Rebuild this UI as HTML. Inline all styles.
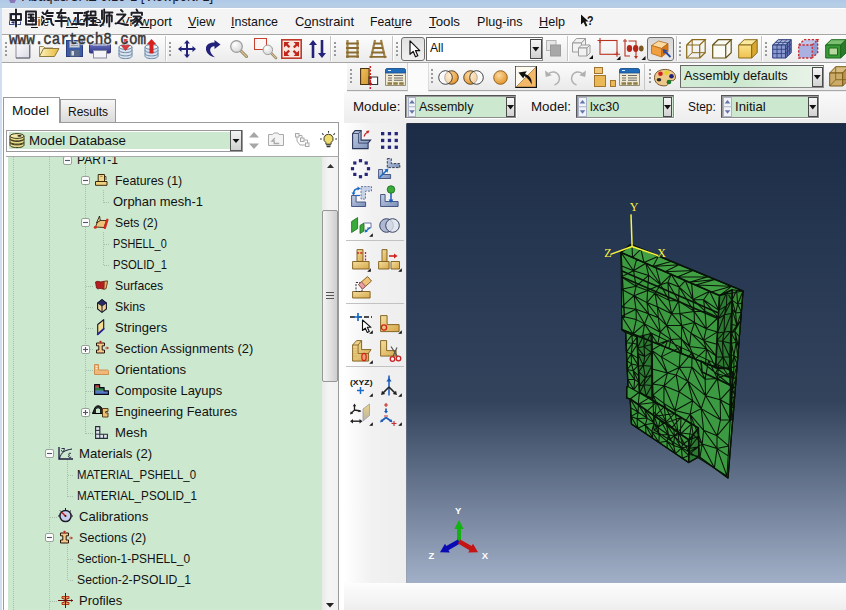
<!DOCTYPE html>
<html><head><meta charset="utf-8">
<style>
*{box-sizing:border-box;margin:0;padding:0}
html,body{width:846px;height:610px;overflow:hidden;background:#fff}
body{font-family:"Liberation Sans",sans-serif;font-size:14px;color:#111;position:relative}
.abs{position:absolute}
.t{position:absolute;white-space:nowrap;transform-origin:0 50%;display:block}
svg{overflow:visible}
</style></head><body>
<div class="abs" style="left:0px;top:0px;width:846px;height:8px;background:linear-gradient(#b0c8e6,#b5cfe8 65%,#bbcbe0);"></div>
<div class="abs" style="left:0px;top:8px;width:2px;height:602px;background:#cfdef0;"></div>
<div class="abs" style="left:2px;top:8px;width:844px;height:27px;background:#f4f4f5;border-top:1px solid #fcfeff;border-bottom:1px solid #a6a6a6"></div>
<div class="abs" style="left:2px;top:35px;width:844px;height:28px;background:linear-gradient(#fdfdfd,#ebebeb);border-bottom:1px solid #a6a6a6"></div>
<div class="abs" style="left:2px;top:63px;width:342px;height:547px;background:#ffffff;"></div>
<div class="abs" style="left:344px;top:63px;width:502px;height:29px;background:linear-gradient(#fcfcfc,#ececec);"></div>
<div class="abs" style="left:344px;top:92px;width:502px;height:31px;background:linear-gradient(#f9f9f9,#ededed);"></div>
<div class="abs" style="left:344px;top:123px;width:62px;height:460px;background:linear-gradient(90deg,#ffffff,#f1f1f1 45%,#eeeeee);"></div>
<div class="abs" style="left:406px;top:123px;width:440px;height:461px;background:linear-gradient(rgb(28,44,71) 0px,rgb(36,53,80) 100px,rgb(51,67,92) 277px,rgb(162,176,200) 461px);border-top:1px solid #2a3040;border-left:1px solid rgba(150,150,150,.35)"></div>
<div class="abs" style="left:344px;top:583px;width:502px;height:27px;background:linear-gradient(#fdfdfd,#eeeeee);"></div>
<div class="abs" style="left:338px;top:123px;width:6px;height:487px;background:#ffffff;"></div>
<span class="t" style="left:31px;top:14.87px;font-size:13.5px;line-height:13.5px;transform:scaleX(0.8274)"><u>F</u>ile</span>
<span class="t" style="left:66px;top:14.87px;font-size:13.5px;line-height:13.5px;transform:scaleX(1.0607)"><u>M</u>odel</span>
<span class="t" style="left:121px;top:14.87px;font-size:13.5px;line-height:13.5px;transform:scaleX(0.9755)">Vie<u>w</u>port</span>
<span class="t" style="left:188px;top:14.87px;font-size:13.5px;line-height:13.5px;transform:scaleX(0.9304)"><u>V</u>iew</span>
<span class="t" style="left:231px;top:14.87px;font-size:13.5px;line-height:13.5px;transform:scaleX(0.9210)"><u>I</u>nstance</span>
<span class="t" style="left:295px;top:14.87px;font-size:13.5px;line-height:13.5px;transform:scaleX(0.9589)">C<u>o</u>nstraint</span>
<span class="t" style="left:370px;top:14.87px;font-size:13.5px;line-height:13.5px;transform:scaleX(0.9028)">Feat<u>u</u>re</span>
<span class="t" style="left:429px;top:14.87px;font-size:13.5px;line-height:13.5px;transform:scaleX(0.9836)"><u>T</u>ools</span>
<span class="t" style="left:477px;top:14.87px;font-size:13.5px;line-height:13.5px;transform:scaleX(0.9329)">Plu<u>g</u>-ins</span>
<span class="t" style="left:539px;top:14.87px;font-size:13.5px;line-height:13.5px;transform:scaleX(0.9364)"><u>H</u>elp</span>
<svg class="abs" style="left:580px;top:14px" width="14" height="14" viewBox="0 0 14 14"><path d="M1 0.5 L1 10.5 L3.6 8.2 L5.6 12.6 L7.4 11.8 L5.4 7.6 L8.6 7.4z" fill="#111"/></svg>
<span class="t" style="left:587px;top:15.34px;font-size:12px;line-height:12px;color:#111;font-weight:bold;transform:scaleX(0.8868);">?</span>
<svg class="abs" style="left:8.5px;top:13px" width="12" height="12" viewBox="0 0 12 12"><rect x="0.5" y="0.5" width="11" height="11" fill="#f4f6fb" stroke="#3a4e8a"/><rect x="0.5" y="0.5" width="11" height="2" fill="#3a4e8a"/><path d="M2 9.5c2 1.500 4 1.500 5.500 0l-2.500-3.500z" fill="#22226a"/></svg>
<span class="t" style="left:352.6px;top:99.77px;font-size:13.5px;line-height:13.5px;color:#111;transform:scaleX(0.9870);">Module:</span>
<span class="t" style="left:530.8px;top:99.77px;font-size:13.5px;line-height:13.5px;color:#111;transform:scaleX(0.9872);">Model:</span>
<span class="t" style="left:688.3px;top:99.77px;font-size:13.5px;line-height:13.5px;color:#111;transform:scaleX(0.8788);">Step:</span>
<div class="abs" style="left:405px;top:94.5px;width:111px;height:23.5px;background:#cce8cf;border:1px solid #8c8c8c;border-top-color:#555;border-left-color:#555;box-shadow:inset 1px 1px 0 #9a9a9a, 0 1px 0 #fff, 1px 0 0 #fff"></div>
<div class="abs" style="left:408px;top:97px;width:8px;height:19.5px;background:#f1f3f9;border:1px solid #aab3c8"></div>
<svg class="abs" style="left:408px;top:97px" width="8" height="19.5" viewBox="0 0 8 19.5"><path d="M1.2000000000000002 6.375 l2.8 -3.5 l2.8 3.5z" fill="#6176a8"/><path d="M1.2000000000000002 13.125 l2.8 3.5 l2.8 -3.5z" fill="#6176a8"/><path d="M1 9.75 h6" stroke="#aab3c8"/></svg>
<div class="abs" style="left:506px;top:96.5px;width:9px;height:20px;background:linear-gradient(#f6f6f6,#d2d2d2);border:1px solid #4a4a4a"></div>
<svg class="abs" style="left:506px;top:96.5px" width="9" height="20" viewBox="0 0 9 20"><path d="M1.0 8.0 h7 l-3.5 4.5z" fill="#111"/></svg>
<span class="t" style="left:419.3px;top:99.77px;font-size:13.5px;line-height:13.5px;color:#111;transform:scaleX(0.9297);">Assembly</span>
<div class="abs" style="left:575.5px;top:94.5px;width:98px;height:23.5px;background:#cce8cf;border:1px solid #8c8c8c;border-top-color:#555;border-left-color:#555;box-shadow:inset 1px 1px 0 #9a9a9a, 0 1px 0 #fff, 1px 0 0 #fff"></div>
<div class="abs" style="left:578px;top:97px;width:9px;height:19.5px;background:#f1f3f9;border:1px solid #aab3c8"></div>
<svg class="abs" style="left:578px;top:97px" width="9" height="19.5" viewBox="0 0 9 19.5"><path d="M1.7000000000000002 6.375 l2.8 -3.5 l2.8 3.5z" fill="#6176a8"/><path d="M1.7000000000000002 13.125 l2.8 3.5 l2.8 -3.5z" fill="#6176a8"/><path d="M1 9.75 h7" stroke="#aab3c8"/></svg>
<div class="abs" style="left:663px;top:96.5px;width:9px;height:20px;background:linear-gradient(#f6f6f6,#d2d2d2);border:1px solid #4a4a4a"></div>
<svg class="abs" style="left:663px;top:96.5px" width="9" height="20" viewBox="0 0 9 20"><path d="M1.0 8.0 h7 l-3.5 4.5z" fill="#111"/></svg>
<span class="t" style="left:590px;top:99.77px;font-size:13.5px;line-height:13.5px;color:#111;transform:scaleX(0.9265);">lxc30</span>
<div class="abs" style="left:720.5px;top:94.5px;width:98px;height:23.5px;background:#cce8cf;border:1px solid #8c8c8c;border-top-color:#555;border-left-color:#555;box-shadow:inset 1px 1px 0 #9a9a9a, 0 1px 0 #fff, 1px 0 0 #fff"></div>
<div class="abs" style="left:723px;top:97px;width:9px;height:19.5px;background:#f1f3f9;border:1px solid #aab3c8"></div>
<svg class="abs" style="left:723px;top:97px" width="9" height="19.5" viewBox="0 0 9 19.5"><path d="M1.7000000000000002 6.375 l2.8 -3.5 l2.8 3.5z" fill="#6176a8"/><path d="M1.7000000000000002 13.125 l2.8 3.5 l2.8 -3.5z" fill="#6176a8"/><path d="M1 9.75 h7" stroke="#aab3c8"/></svg>
<div class="abs" style="left:808px;top:96.5px;width:9.5px;height:20px;background:linear-gradient(#f6f6f6,#d2d2d2);border:1px solid #4a4a4a"></div>
<svg class="abs" style="left:808px;top:96.5px" width="9.5" height="20" viewBox="0 0 9.5 20"><path d="M1.25 8.0 h7 l-3.5 4.5z" fill="#111"/></svg>
<span class="t" style="left:735.3px;top:99.77px;font-size:13.5px;line-height:13.5px;color:#111;transform:scaleX(0.9741);">Initial</span>
<div class="abs" style="left:0;top:0;width:846px;height:610px;clip-path:inset(157px 508px 0 6px)">
<div class="abs" style="left:8px;top:156px;width:314px;height:454px;background:#cce8cf;"></div>
<div class="abs" style="left:6px;top:156px;width:2px;height:454px;background:#ffffff;"></div>
<span class="t" style="left:77px;top:153.17px;font-size:13.5px;line-height:13.5px;color:#111;transform:scaleX(0.8909);">PART-1</span>
<span class="t" style="left:114.8px;top:174.17px;font-size:13.5px;line-height:13.5px;color:#111;transform:scaleX(0.9140);">Features (1)</span>
<span class="t" style="left:113px;top:195.17px;font-size:13.5px;line-height:13.5px;color:#111;transform:scaleX(0.9596);">Orphan mesh-1</span>
<span class="t" style="left:114.8px;top:216.17px;font-size:13.5px;line-height:13.5px;color:#111;transform:scaleX(0.9035);">Sets (2)</span>
<span class="t" style="left:113px;top:237.17px;font-size:13.5px;line-height:13.5px;color:#111;transform:scaleX(0.8039);">PSHELL_0</span>
<span class="t" style="left:113px;top:258.17px;font-size:13.5px;line-height:13.5px;color:#111;transform:scaleX(0.8368);">PSOLID_1</span>
<span class="t" style="left:114.8px;top:279.17px;font-size:13.5px;line-height:13.5px;color:#111;transform:scaleX(0.9048);">Surfaces</span>
<span class="t" style="left:114.8px;top:300.17px;font-size:13.5px;line-height:13.5px;color:#111;transform:scaleX(0.9148);">Skins</span>
<span class="t" style="left:114.8px;top:321.17px;font-size:13.5px;line-height:13.5px;color:#111;transform:scaleX(0.9663);">Stringers</span>
<span class="t" style="left:114.8px;top:342.17px;font-size:13.5px;line-height:13.5px;color:#111;transform:scaleX(0.9494);">Section Assignments (2)</span>
<span class="t" style="left:114.8px;top:363.17px;font-size:13.5px;line-height:13.5px;color:#111;transform:scaleX(0.9782);">Orientations</span>
<span class="t" style="left:114.8px;top:384.17px;font-size:13.5px;line-height:13.5px;color:#111;transform:scaleX(0.9588);">Composite Layups</span>
<span class="t" style="left:114.8px;top:405.17px;font-size:13.5px;line-height:13.5px;color:#111;transform:scaleX(0.9467);">Engineering Features</span>
<span class="t" style="left:114.8px;top:426.17px;font-size:13.5px;line-height:13.5px;color:#111;transform:scaleX(0.9754);">Mesh</span>
<span class="t" style="left:78.8px;top:447.17px;font-size:13.5px;line-height:13.5px;color:#111;transform:scaleX(0.9758);">Materials (2)</span>
<span class="t" style="left:77px;top:468.17px;font-size:13.5px;line-height:13.5px;color:#111;transform:scaleX(0.8451);">MATERIAL_PSHELL_0</span>
<span class="t" style="left:77px;top:489.17px;font-size:13.5px;line-height:13.5px;color:#111;transform:scaleX(0.8661);">MATERIAL_PSOLID_1</span>
<span class="t" style="left:78.8px;top:510.17px;font-size:13.5px;line-height:13.5px;color:#111;transform:scaleX(0.9708);">Calibrations</span>
<span class="t" style="left:78.8px;top:531.17px;font-size:13.5px;line-height:13.5px;color:#111;transform:scaleX(0.9330);">Sections (2)</span>
<span class="t" style="left:77px;top:552.17px;font-size:13.5px;line-height:13.5px;color:#111;transform:scaleX(0.8806);">Section-1-PSHELL_0</span>
<span class="t" style="left:77px;top:573.17px;font-size:13.5px;line-height:13.5px;color:#111;transform:scaleX(0.9043);">Section-2-PSOLID_1</span>
<span class="t" style="left:78.8px;top:594.17px;font-size:13.5px;line-height:13.5px;color:#111;transform:scaleX(0.9597);">Profiles</span>
<div class="abs" style="left:13px;top:157px;width:1px;height:453px;background:repeating-linear-gradient(#a9bfae 0 1px,transparent 1px 2px)"></div>
<div class="abs" style="left:49px;top:157px;width:1px;height:453px;background:repeating-linear-gradient(#a9bfae 0 1px,transparent 1px 2px)"></div>
<div class="abs" style="left:85px;top:165px;width:1px;height:269px;background:repeating-linear-gradient(#a9bfae 0 1px,transparent 1px 2px)"></div>
<div class="abs" style="left:103px;top:190px;width:1px;height:13px;background:repeating-linear-gradient(#a9bfae 0 1px,transparent 1px 2px)"></div>
<div class="abs" style="left:103px;top:232px;width:1px;height:34px;background:repeating-linear-gradient(#a9bfae 0 1px,transparent 1px 2px)"></div>
<div class="abs" style="left:104px;top:202px;width:6px;height:1px;background:repeating-linear-gradient(90deg,#a9bfae 0 1px,transparent 1px 2px)"></div>
<div class="abs" style="left:104px;top:244px;width:6px;height:1px;background:repeating-linear-gradient(90deg,#a9bfae 0 1px,transparent 1px 2px)"></div>
<div class="abs" style="left:104px;top:265px;width:6px;height:1px;background:repeating-linear-gradient(90deg,#a9bfae 0 1px,transparent 1px 2px)"></div>
<div class="abs" style="left:86px;top:286px;width:7px;height:1px;background:repeating-linear-gradient(90deg,#a9bfae 0 1px,transparent 1px 2px)"></div>
<div class="abs" style="left:86px;top:307px;width:7px;height:1px;background:repeating-linear-gradient(90deg,#a9bfae 0 1px,transparent 1px 2px)"></div>
<div class="abs" style="left:86px;top:328px;width:7px;height:1px;background:repeating-linear-gradient(90deg,#a9bfae 0 1px,transparent 1px 2px)"></div>
<div class="abs" style="left:86px;top:370px;width:7px;height:1px;background:repeating-linear-gradient(90deg,#a9bfae 0 1px,transparent 1px 2px)"></div>
<div class="abs" style="left:86px;top:391px;width:7px;height:1px;background:repeating-linear-gradient(90deg,#a9bfae 0 1px,transparent 1px 2px)"></div>
<div class="abs" style="left:86px;top:433px;width:7px;height:1px;background:repeating-linear-gradient(90deg,#a9bfae 0 1px,transparent 1px 2px)"></div>
<div class="abs" style="left:90px;top:349px;width:3px;height:1px;background:repeating-linear-gradient(90deg,#a9bfae 0 1px,transparent 1px 2px)"></div>
<div class="abs" style="left:90px;top:412px;width:3px;height:1px;background:repeating-linear-gradient(90deg,#a9bfae 0 1px,transparent 1px 2px)"></div>
<div class="abs" style="left:67px;top:460px;width:1px;height:37px;background:repeating-linear-gradient(#a9bfae 0 1px,transparent 1px 2px)"></div>
<div class="abs" style="left:68px;top:475px;width:6px;height:1px;background:repeating-linear-gradient(90deg,#a9bfae 0 1px,transparent 1px 2px)"></div>
<div class="abs" style="left:68px;top:496px;width:6px;height:1px;background:repeating-linear-gradient(90deg,#a9bfae 0 1px,transparent 1px 2px)"></div>
<div class="abs" style="left:67px;top:545px;width:1px;height:36px;background:repeating-linear-gradient(#a9bfae 0 1px,transparent 1px 2px)"></div>
<div class="abs" style="left:68px;top:559px;width:6px;height:1px;background:repeating-linear-gradient(90deg,#a9bfae 0 1px,transparent 1px 2px)"></div>
<div class="abs" style="left:68px;top:580px;width:6px;height:1px;background:repeating-linear-gradient(90deg,#a9bfae 0 1px,transparent 1px 2px)"></div>
<div class="abs" style="left:50px;top:517px;width:7px;height:1px;background:repeating-linear-gradient(90deg,#a9bfae 0 1px,transparent 1px 2px)"></div>
<div class="abs" style="left:50px;top:601px;width:7px;height:1px;background:repeating-linear-gradient(90deg,#a9bfae 0 1px,transparent 1px 2px)"></div>
<svg class="abs" style="left:63.0px;top:155.5px" width="9" height="9" viewBox="0 0 9 9"><rect x="0.5" y="0.5" width="8" height="8" rx="1.5" fill="#fcfcfc" stroke="#96a29a"/><path d="M2 4.5h5" stroke="#55556e" stroke-width="1.100"/></svg>
<svg class="abs" style="left:81.0px;top:176.0px" width="9" height="9" viewBox="0 0 9 9"><rect x="0.5" y="0.5" width="8" height="8" rx="1.5" fill="#fcfcfc" stroke="#96a29a"/><path d="M2 4.5h5" stroke="#55556e" stroke-width="1.100"/></svg>
<svg class="abs" style="left:81.0px;top:218.0px" width="9" height="9" viewBox="0 0 9 9"><rect x="0.5" y="0.5" width="8" height="8" rx="1.5" fill="#fcfcfc" stroke="#96a29a"/><path d="M2 4.5h5" stroke="#55556e" stroke-width="1.100"/></svg>
<svg class="abs" style="left:81.0px;top:344.5px" width="9" height="9" viewBox="0 0 9 9"><rect x="0.5" y="0.5" width="8" height="8" rx="1.5" fill="#fcfcfc" stroke="#96a29a"/><path d="M2 4.5h5" stroke="#55556e" stroke-width="1.100"/><path d="M4.5 2v5" stroke="#55556e" stroke-width="1.100"/></svg>
<svg class="abs" style="left:81.0px;top:407.5px" width="9" height="9" viewBox="0 0 9 9"><rect x="0.5" y="0.5" width="8" height="8" rx="1.5" fill="#fcfcfc" stroke="#96a29a"/><path d="M2 4.5h5" stroke="#55556e" stroke-width="1.100"/><path d="M4.5 2v5" stroke="#55556e" stroke-width="1.100"/></svg>
<svg class="abs" style="left:45.0px;top:449.0px" width="9" height="9" viewBox="0 0 9 9"><rect x="0.5" y="0.5" width="8" height="8" rx="1.5" fill="#fcfcfc" stroke="#96a29a"/><path d="M2 4.5h5" stroke="#55556e" stroke-width="1.100"/></svg>
<svg class="abs" style="left:45.0px;top:533.0px" width="9" height="9" viewBox="0 0 9 9"><rect x="0.5" y="0.5" width="8" height="8" rx="1.5" fill="#fcfcfc" stroke="#96a29a"/><path d="M2 4.5h5" stroke="#55556e" stroke-width="1.100"/></svg>
<svg class="abs" style="left:95px;top:174px" width="13" height="12" viewBox="0 0 13 12"><path d="M3.200 0.500h6.300v7h-6.300z" fill="#f2d688" stroke="#3a2a10" stroke-width="1"/><path d="M5.200 2.300h2.300" stroke="#8a6a30" stroke-width=".8"/><path d="M9.500 2.500h1.500v3.500" fill="none" stroke="#3a2a10" stroke-width=".8"/><path d="M0.500 7.500h11.500v3.800h-11.500z" fill="#f0d27c" stroke="#3a2a10" stroke-width="1"/></svg>
<svg class="abs" style="left:93px;top:215px" width="16" height="14" viewBox="0 0 16 14"><path d="M2.500 12 L5 5.500 L13.500 5.500 L11 12.500z" fill="#efc27a" stroke="#3a2a10" stroke-width=".9"/><path d="M3.500 8 L6.500 1 L7.300 5.500z" fill="#f8e0a8" stroke="#2a1a08" stroke-width=".9"/><path d="M14.300 4.800 L11.800 12.800" stroke="#d42a20" stroke-width="2.400" fill="none" stroke-linecap="round"/><circle cx="2.300" cy="12.300" r="1.500" fill="#d42a20"/></svg>
<svg class="abs" style="left:95px;top:280px" width="13" height="11" viewBox="0 0 13 11"><path d="M0.5 2 C3 0 5 3 7.5 1.5 L12.5 1 L11 8.5 C8 10.5 5.5 7 3 9 L1.5 8z" fill="#b51f1f" stroke="#6a1010" stroke-width=".8"/><path d="M9.5 1.5l3-.5-1.5 7.5-2 .8z" fill="#e7b56a" stroke="#6a3a10" stroke-width=".6"/></svg>
<svg class="abs" style="left:97px;top:299px" width="10" height="14" viewBox="0 0 10 14"><path d="M5 0.600 L9.400 4 L9.400 10 L5 13.400 L0.600 10 L0.600 4z" fill="#f0d494" stroke="#14142a" stroke-width="1.100"/><path d="M5 0.600 L9.400 4 L5 7 L0.600 4z" fill="#2a2a66" stroke="#14142a" stroke-width=".8"/><path d="M5 7V13.400" stroke="#14142a" stroke-width="1"/></svg>
<svg class="abs" style="left:97px;top:319px" width="8" height="16" viewBox="0 0 8 16"><path d="M0.700 5.500 L6.700 0.700 L6.700 9.800 L0.700 15.300z" fill="#f4dc90" stroke="#16162a" stroke-width="1.100" stroke-linejoin="round"/><path d="M6.700 9.800 L0.700 15.300" stroke="#22229a" stroke-width="1.800" stroke-linecap="round"/></svg>
<svg class="abs" style="left:95px;top:341px" width="14" height="14" viewBox="0 0 14 14"><path d="M1.500 2h8v2.800h-2.300v4.200h2.300v3h-8v-3h2.300v-4.200h-2.300z" fill="#f4c88a" stroke="#2a1408" stroke-width="1"/><path d="M5.500 0v2" stroke="#c02a18" stroke-width="1"/><path d="M4 1.300l1.500-1.500 1.500 1.500" fill="none" stroke="#c02a18" stroke-width=".8"/><path d="M10.300 7h3l-1.300-1.300m1.300 1.300l-1.300 1.300" fill="none" stroke="#c02a18" stroke-width="1"/></svg>
<svg class="abs" style="left:59px;top:530.5px" width="14" height="14" viewBox="0 0 14 14"><path d="M1.500 2h8v2.800h-2.300v4.200h2.300v3h-8v-3h2.300v-4.200h-2.300z" fill="#f4c88a" stroke="#2a1408" stroke-width="1"/><path d="M5.500 0v2" stroke="#c02a18" stroke-width="1"/><path d="M4 1.300l1.500-1.500 1.500 1.500" fill="none" stroke="#c02a18" stroke-width=".8"/><path d="M10.300 7h3l-1.300-1.300m1.300 1.300l-1.300 1.300" fill="none" stroke="#c02a18" stroke-width="1"/></svg>
<svg class="abs" style="left:94px;top:364px" width="15" height="11" viewBox="0 0 15 11"><path d="M0.5 0.5h4v5.5h9c1 0 1.2 1.2 1 2.2v2.3h-14z" fill="#f0b878" stroke="#c98a48" stroke-width=".9"/><path d="M1.8 2.5h1.5M1.8 4.5h1.5" stroke="#fff2d8"/></svg>
<svg class="abs" style="left:94px;top:384px" width="15" height="11" viewBox="0 0 15 11"><rect x="0.600" y="0.600" width="5" height="3.200" fill="#b84444"/><rect x="0.600" y="3.600" width="9.500" height="3.200" fill="#2a7a48"/><rect x="0.600" y="6.800" width="13.800" height="3.200" fill="#5878c8"/><path d="M0.600 10.400V0.600h5v3h4.500v3.200h4.300v3.600z" fill="none" stroke="#0a0a14" stroke-width="1.200" stroke-linejoin="round"/></svg>
<svg class="abs" style="left:92px;top:404px" width="17" height="14" viewBox="0 0 17 14"><path d="M0.5 9.5 L3 3.5 Q6 0 9.5 3.5 L11 7v2.5z" fill="#2b2b2b" stroke="#000"/><path d="M3.5 9V5 Q6 2.5 8.5 5V9" fill="#c8e6cc" stroke="#000" stroke-width=".7"/><path d="M10.5 4.5h5.5v3h-2.3v1.5h2.3v4h-5.5z" fill="#efc070" stroke="#4a3010" stroke-width=".9"/></svg>
<svg class="abs" style="left:95px;top:426px" width="13" height="13" viewBox="0 0 13 13"><path d="M0.600 0.600h4.200v7.600h7.600v4.200h-11.800z" fill="#dfe5ec" stroke="#262c36" stroke-width="1.100"/><path d="M0.600 4.400h4.200M0.600 8.200h4.200M4.800 8.200v4.200M8.600 8.200v4.200" stroke="#262c36" fill="none" stroke-width="1"/></svg>
<svg class="abs" style="left:58px;top:447px" width="15" height="13" viewBox="0 0 15 13"><path d="M1 0v12h14" fill="none" stroke="#1a1a3a" stroke-width="1.3"/><path d="M1.5 11.5 C3.5 5 6 3.5 14 2" fill="none" stroke="#1a1a3a" stroke-width="1"/><path d="M3.5 1.5h3l-1 3.2c-1.2.3-2.2-.4-2-1.6" fill="none" stroke="#1a1a3a" stroke-width=".9"/><path d="M13 6.5c-2-1-3.3 1-1.5 1.8c-2 .6-.8 3 1.7 1.8" fill="none" stroke="#1a1a3a" stroke-width=".9"/></svg>
<svg class="abs" style="left:58px;top:508px" width="15" height="15" viewBox="0 0 15 15"><circle cx="7.5" cy="8" r="5.6" fill="#c9cde9" stroke="#1a1a2a" stroke-width="1.5"/><path d="M7.5 8 L4 4.5" stroke="#c0201c" stroke-width="1.6"/><path d="M7.5 0v2M2 2.5l1.2 1.2M13 2.5l-1.2 1.2M0 8h1.5M13.5 8H15" stroke="#1a1a2a" stroke-width="1"/><circle cx="7.5" cy="8" r="1" fill="#222"/></svg>
<svg class="abs" style="left:58px;top:592.5px" width="15" height="15" viewBox="0 0 15 15"><path d="M4 3.5h7v2h-2.2v4h2.2v2h-7v-2h2.2v-4h-2.2z" fill="#f0a860" stroke="#a02a10" stroke-width=".9"/><path d="M7.5 0v15M0 7.5h15" stroke="#6a1010" stroke-width="1"/><path d="M15 7.5l-2-1.5v3z" fill="#6a1010"/></svg>
<div class="abs" style="left:322px;top:157px;width:16px;height:453px;background:linear-gradient(90deg,#e9e9e9,#f4f4f4 40%,#f2f2f2);"></div>
<svg class="abs" style="left:326.5px;top:164px" width="7" height="4" viewBox="0 0 7 4"><path d="M0 4 L3.500 0 L7 4z" fill="#333"/></svg>
<svg class="abs" style="left:326px;top:603px" width="8" height="5" viewBox="0 0 8 5"><path d="M0 0 L4 4.5 L8 0z" fill="#222"/></svg>
<div class="abs" style="left:322px;top:210px;width:16px;height:172px;background:linear-gradient(90deg,#f4f4f4,#e2e2e2 50%,#cfcfcf);border:1px solid #979797;border-radius:2px"></div>
<div class="abs" style="left:326px;top:292px;width:8px;height:1px;background:#555;"></div>
<div class="abs" style="left:326px;top:295px;width:8px;height:1px;background:#555;"></div>
<div class="abs" style="left:326px;top:298px;width:8px;height:1px;background:#555;"></div>
</div>
<div class="abs" style="left:3px;top:122px;width:336px;height:1px;background:#9a9a9a;"></div>
<div class="abs" style="left:3px;top:123px;width:1px;height:487px;background:#9a9a9a;"></div>
<div class="abs" style="left:338px;top:123px;width:1px;height:487px;background:#9a9a9a;"></div>
<div class="abs" style="left:6px;top:156px;width:333px;height:1px;background:#a9a9a9;"></div>
<div class="abs" style="left:60px;top:99px;width:56px;height:24px;background:linear-gradient(#f6f6f6,#dadada);border:1px solid #9a9a9a"></div>
<div class="abs" style="left:3px;top:97px;width:57px;height:26px;background:#ffffff;border:1px solid #9a9a9a;border-bottom:none"></div>
<span class="t" style="left:12px;top:103.87px;font-size:13.5px;line-height:13.5px;color:#111;transform:scaleX(1.0063);">Model</span>
<span class="t" style="left:68px;top:104.57px;font-size:13.5px;line-height:13.5px;color:#111;transform:scaleX(0.8886);">Results</span>
<div class="abs" style="left:6px;top:130px;width:237px;height:22px;background:#ffffff;border:1px solid #9a9a9a"></div>
<div class="abs" style="left:9px;top:132px;width:222px;height:17px;background:#cce8cf;"></div>
<div class="abs" style="left:230px;top:130px;width:12px;height:21px;background:linear-gradient(#f4f4f4,#d0d0d0);border:1px solid #5a5a5a"></div>
<svg class="abs" style="left:230px;top:130px" width="12" height="21" viewBox="0 0 12 21"><path d="M2.5 9 h7 l-3.5 4z" fill="#111"/></svg>
<span class="t" style="left:29px;top:134.27px;font-size:13.5px;line-height:13.5px;color:#111;transform:scaleX(0.9867);">Model Database</span>
<svg class="abs" style="left:9px;top:133px" width="16" height="15" viewBox="0 0 16 15"><g stroke="#3b3a1c" stroke-width="1" fill="#e6d98c">
<path d="M1 9.5v2.5c0 1.6 3 2.6 7 2.6s7-1 7-2.6V9.5z"/><ellipse cx="8" cy="9.5" rx="7" ry="2.4"/>
<path d="M1 6v2.5c0 1.6 3 2.6 7 2.6s7-1 7-2.6V6z"/><ellipse cx="8" cy="6" rx="7" ry="2.4"/>
<path d="M1 3v2.3c0 1.6 3 2.6 7 2.6s7-1 7-2.6V3z"/><ellipse cx="8" cy="3" rx="7" ry="2.4" fill="#f3e9a6"/></g>
<ellipse cx="10.5" cy="2.8" rx="2.2" ry="0.9" fill="#222"/></svg>
<svg class="abs" style="left:249px;top:132px" width="10" height="17" viewBox="0 0 10 17"><path d="M0 5.5 L5 0 L10 5.5z M0 11.5 L5 17 L10 11.5z" fill="#a6a6a6"/></svg>
<svg class="abs" style="left:268px;top:132px" width="16" height="14" viewBox="0 0 16 14"><path d="M0.5 13.5v-11h4l1.5-1.5h4l1 1.5h4.5v11z" fill="#f4f4f4" stroke="#a9a9a9"/><path d="M7 6l-3 3h2.2v2.5h5" fill="none" stroke="#a9a9a9" stroke-width="1.3"/></svg>
<svg class="abs" style="left:295px;top:133px" width="15" height="15" viewBox="0 0 15 15"><g fill="#f6f6f6" stroke="#a9a9a9"><rect x="0.5" y="0.5" width="3.5" height="3.5"/><rect x="5.5" y="5" width="3.5" height="3.5"/><rect x="10.5" y="10" width="3.5" height="3.5"/></g><path d="M2 4v4l3 4h5 M4 2.5h3v2.5 M9 7h3.5v3" fill="none" stroke="#a9a9a9"/></svg>
<svg class="abs" style="left:320px;top:131px" width="17" height="17" viewBox="0 0 17 17"><path d="M8.5 3.2a4.6 4.6 0 0 0-2.6 8.4v1.6h5.2v-1.6a4.6 4.6 0 0 0-2.6-8.4z" fill="#efdc6e" stroke="#3a3a2a" stroke-width="1"/>
<path d="M6.2 14h4.6M6.6 15.6h3.8" stroke="#333" stroke-width="1.2"/>
<path d="M8.5 0v1.8M2.2 2.4l1.3 1.4M14.8 2.4l-1.3 1.4M0 8h1.8M15.2 8H17" stroke="#333" stroke-width="1.1"/></svg>
<div class="abs" style="left:5px;top:42px;width:2px;height:2px;background:#9a9a9a;"></div>
<div class="abs" style="left:5px;top:46px;width:2px;height:2px;background:#9a9a9a;"></div>
<div class="abs" style="left:5px;top:50px;width:2px;height:2px;background:#9a9a9a;"></div>
<div class="abs" style="left:5px;top:54px;width:2px;height:2px;background:#9a9a9a;"></div>
<svg class="abs" style="left:15px;top:43px" width="16" height="16" viewBox="0 0 16 16"><path d="M1 0.5h13.5v14.5h-13.5z" fill="url(#gnew)" stroke="#8c8c9c"/><path d="M1 15h14M14.8 1v14" stroke="#6a6a7a" stroke-width="1.2"/><defs><linearGradient id="gnew" x1="0" y1="0" x2="1" y2="1"><stop offset="0" stop-color="#ffffff"/><stop offset="1" stop-color="#d8d8e4"/></linearGradient></defs></svg>
<svg class="abs" style="left:38px;top:44px" width="22" height="13" viewBox="0 0 22 13"><path d="M1.5 12.5v-10h4l1.5 1.5h8v3" fill="#f6f0d0" stroke="#9a8a50"/><path d="M1.5 12.5 L5.5 4.5 H21 L16.5 12.5z" fill="url(#gop)" stroke="#8a7a40"/><defs><linearGradient id="gop" x1="0" y1="0" x2="1" y2="0"><stop offset="0" stop-color="#fbf2c0"/><stop offset="1" stop-color="#e8b838"/></linearGradient></defs></svg>
<svg class="abs" style="left:66px;top:40px" width="17" height="17" viewBox="0 0 17 17"><rect x="0.5" y="0.5" width="16" height="16" fill="#3d5ca8" stroke="#2a3f80"/><rect x="3.5" y="1.5" width="10" height="6" fill="#c9cfdc" stroke="#8893b0" stroke-width=".6"/><path d="M5 3.5h7M5 5.5h7" stroke="#8a8a9a" stroke-width=".8"/><rect x="4" y="10" width="9.5" height="6.5" fill="#5b6a86"/><rect x="5.5" y="11" width="2.5" height="4.5" fill="#d6dae6"/></svg>
<svg class="abs" style="left:89px;top:43px" width="22" height="16" viewBox="0 0 22 16"><rect x="0.5" y="1" width="21" height="9" rx="1" fill="url(#gpr)" stroke="#3a3a7a"/><rect x="4.5" y="7.5" width="13" height="7.5" fill="#f4f4f8" stroke="#8a8aa0"/><rect x="4" y="0.5" width="14" height="2.5" fill="#9aa0c8"/><defs><linearGradient id="gpr" x1="0" y1="0" x2="0" y2="1"><stop offset="0" stop-color="#6a72b8"/><stop offset="1" stop-color="#2e3590"/></linearGradient></defs></svg>
<svg class="abs" style="left:118px;top:39px" width="15" height="21" viewBox="0 0 15 21"><path d="M1 8v9c0 1.6 3 2.6 6.5 2.6s6.5-1 6.5-2.6V8z" fill="#d9e2ee" stroke="#6a8aa8"/><path d="M1 11c0 1.6 3 2.6 6.5 2.6s6.5-1 6.5-2.6M1 14.3c0 1.6 3 2.6 6.5 2.6s6.5-1 6.5-2.6" fill="none" stroke="#6a8aa8"/><ellipse cx="7.5" cy="8" rx="6.5" ry="2.4" fill="#eef3f8" stroke="#6a8aa8"/><path d="M5.5 0h4v6h3L7.5 12 2.5 6h3z" fill="#d02828" opacity=".9"/></svg>
<svg class="abs" style="left:144px;top:39px" width="15" height="21" viewBox="0 0 15 21"><path d="M1 8v9c0 1.6 3 2.6 6.5 2.6s6.5-1 6.5-2.6V8z" fill="#d9e2ee" stroke="#6a8aa8"/><path d="M1 11c0 1.6 3 2.6 6.5 2.6s6.5-1 6.5-2.6M1 14.3c0 1.6 3 2.6 6.5 2.6s6.5-1 6.5-2.6" fill="none" stroke="#6a8aa8"/><ellipse cx="7.5" cy="8" rx="6.5" ry="2.4" fill="#eef3f8" stroke="#6a8aa8"/><path d="M7.5 0l5 5.5h-3v9h-4v-9h-3z" fill="#d62020"/></svg>
<div class="abs" style="left:165px;top:36px;width:1px;height:25px;background:#c6c6c6;"></div>
<div class="abs" style="left:166px;top:36px;width:1px;height:25px;background:#ffffff;"></div>
<div class="abs" style="left:169px;top:42px;width:2px;height:2px;background:#9a9a9a;"></div>
<div class="abs" style="left:169px;top:46px;width:2px;height:2px;background:#9a9a9a;"></div>
<div class="abs" style="left:169px;top:50px;width:2px;height:2px;background:#9a9a9a;"></div>
<div class="abs" style="left:169px;top:54px;width:2px;height:2px;background:#9a9a9a;"></div>
<svg class="abs" style="left:178px;top:40px" width="18" height="18" viewBox="0 0 18 18"><path d="M9 0l3 3.5h-2v4.5h4.5v-2l3.5 3-3.500 3v-2h-4.500v4.500h2l-3 3.500-3-3.500h2v-4.500h-4.500v2l-3.500-3 3.500-3v2h4.500v-4.500h-2z" fill="#22227a"/></svg>
<svg class="abs" style="left:205px;top:40px" width="16" height="18" viewBox="0 0 16 18"><path d="M9.500 0l6 4.500-6 4.500v-2.800c-3.500 0-5 2.500-4 5.500.600 2 2.200 3.800 4.500 5.500-6-1-9.500-5-9-9.500.500-3.500 4-5.200 8.500-5.200z" fill="#22227a"/></svg>
<svg class="abs" style="left:230px;top:40px" width="18" height="18" viewBox="0 0 18 18"><path d="M10 10 L16.500 16.500" stroke="#8a7a5a" stroke-width="3" stroke-linecap="round"/><path d="M10 10 L16.500 16.500" stroke="#d8c090" stroke-width="1.400" stroke-linecap="round"/><circle cx="6.500" cy="6.500" r="5.800" fill="url(#gmag)" stroke="#9a9a9a" stroke-width="1.200"/><defs><radialGradient id="gmag" cx=".35" cy=".3" r=".8"><stop offset="0" stop-color="#ffffff"/><stop offset="1" stop-color="#d4d4d4"/></radialGradient></defs></svg>
<svg class="abs" style="left:254px;top:38px" width="23" height="21" viewBox="0 0 23 21"><rect x="0.500" y="0.500" width="12" height="11" fill="#fdf6f4" stroke="#c84030" stroke-width="1"/><g transform="translate(8.500,6.500) scale(.82)"><path d="M10 10 L16.500 16.500" stroke="#8a7a5a" stroke-width="3" stroke-linecap="round"/><path d="M10 10 L16.500 16.500" stroke="#d8c090" stroke-width="1.400" stroke-linecap="round"/><circle cx="6.500" cy="6.500" r="5.800" fill="url(#gmag)" stroke="#9a9a9a" stroke-width="1.200"/></g></svg>
<svg class="abs" style="left:281px;top:39px" width="21" height="20" viewBox="0 0 21 20"><rect x="0.800" y="0.800" width="19.400" height="18.400" fill="#f8e6e0" stroke="#c03a2a" stroke-width="1.600"/><g fill="#c0281c"><path d="M3 3h5.500l-1.800 1.800 2.600 2.600-1.600 1.600-2.600-2.600L3 8.500z"/><path d="M18 3v5.500l-1.800-1.800-2.600 2.600-1.600-1.600 2.600-2.600L12.500 3z"/><path d="M3 17v-5.500l1.800 1.800 2.600-2.600 1.600 1.600-2.600 2.600L8.500 17z"/><path d="M18 17h-5.500l1.800-1.800-2.600-2.600 1.600-1.600 2.600 2.600L18 11.500z"/></g></svg>
<svg class="abs" style="left:309px;top:40px" width="17" height="18" viewBox="0 0 17 18"><path d="M4 0l4 5h-2.700v13h-2.600v-13h-2.700z" fill="#22227a"/><path d="M13 18l-4-5h2.700v-13h2.600v13h2.700z" fill="#22227a"/></svg>
<div class="abs" style="left:330px;top:36px;width:1px;height:25px;background:#c6c6c6;"></div>
<div class="abs" style="left:331px;top:36px;width:1px;height:25px;background:#ffffff;"></div>
<div class="abs" style="left:334px;top:42px;width:2px;height:2px;background:#9a9a9a;"></div>
<div class="abs" style="left:334px;top:46px;width:2px;height:2px;background:#9a9a9a;"></div>
<div class="abs" style="left:334px;top:50px;width:2px;height:2px;background:#9a9a9a;"></div>
<div class="abs" style="left:334px;top:54px;width:2px;height:2px;background:#9a9a9a;"></div>
<svg class="abs" style="left:345px;top:40px" width="15" height="18" viewBox="0 0 15 18"><path d="M2.500 0v18M12.500 0v18" stroke="#a08448" stroke-width="2.200"/><path d="M1 3.500h13M1 8h13M1 12.500h13M1 16.500h13" stroke="#8a6c30" stroke-width="1.800"/></svg>
<svg class="abs" style="left:369px;top:40px" width="18" height="18" viewBox="0 0 18 18"><path d="M6 0L2 18M12 0l4 18" stroke="#a08448" stroke-width="2.200"/><path d="M5 3.500h8M4 8h10M2.500 12.500h13M0.500 16.800h17" stroke="#8a6c30" stroke-width="1.800"/></svg>
<div class="abs" style="left:392px;top:36px;width:1px;height:25px;background:#c6c6c6;"></div>
<div class="abs" style="left:393px;top:36px;width:1px;height:25px;background:#ffffff;"></div>
<div class="abs" style="left:396px;top:42px;width:2px;height:2px;background:#9a9a9a;"></div>
<div class="abs" style="left:396px;top:46px;width:2px;height:2px;background:#9a9a9a;"></div>
<div class="abs" style="left:396px;top:50px;width:2px;height:2px;background:#9a9a9a;"></div>
<div class="abs" style="left:396px;top:54px;width:2px;height:2px;background:#9a9a9a;"></div>
<div class="abs" style="left:400.5px;top:36.5px;width:24.5px;height:24px;background:linear-gradient(#e2e2e2,#f0f0f0);border:1px solid #6e6e6e;border-radius:3px"></div>
<svg class="abs" style="left:409px;top:40px" width="12" height="18" viewBox="0 0 12 18"><path d="M1 0.800v13.500l3.200-2.800 2.300 5.300 2.300-1-2.300-5.200h4.300z" fill="#fff" stroke="#111" stroke-width="1.200" stroke-linejoin="round"/></svg>
<div class="abs" style="left:425.5px;top:36.5px;width:117.5px;height:24.5px;background:#ffffff;border:1px solid #8a8a8a;border-top-color:#666;border-left-color:#666"></div>
<span class="t" style="left:430px;top:41.17px;font-size:13.5px;line-height:13.5px;color:#111;transform:scaleX(0.8997);">All</span>
<div class="abs" style="left:530px;top:39px;width:11.5px;height:20px;background:linear-gradient(#f6f6f6,#d2d2d2);border:1px solid #4a4a4a"></div>
<svg class="abs" style="left:530px;top:39px" width="11.5" height="20" viewBox="0 0 11.5 20"><path d="M2.25 8.0 h7 l-3.5 4.5z" fill="#111"/></svg>
<svg class="abs" style="left:546px;top:40px" width="15" height="17" viewBox="0 0 15 17"><rect x="0.500" y="0.500" width="9.500" height="10" fill="#e6e6e6" stroke="#b4b4b4"/><rect x="4.500" y="5" width="10" height="11" fill="#a8a8a8" stroke="#9a9a9a"/></svg>
<div class="abs" style="left:567px;top:36px;width:1px;height:25px;background:#c6c6c6;"></div>
<div class="abs" style="left:568px;top:36px;width:1px;height:25px;background:#ffffff;"></div>
<svg class="abs" style="left:572px;top:38px" width="21" height="21" viewBox="0 0 21 21"><g fill="#f2f2f2" stroke="#9c9c9c" stroke-width="1"><path d="M0.500 5l4-4.500h9l-4 4.500z"/><path d="M0.500 5h9v9h-9z"/><path d="M9.500 5l4-4.500v9l-4 4.500z"/><path d="M6.500 10l3-3h8.500l-3 3z"/><path d="M6.500 10h8.500v8h-8.500z"/><path d="M15 10l3-3v8l-3 3z"/></g><path d="M21 17v4h-4z" fill="#111"/></svg>
<svg class="abs" style="left:596.5px;top:38px" width="24" height="22" viewBox="0 0 24 22"><rect x="3" y="2.500" width="17" height="13.800" fill="none" stroke="#b83222" stroke-width="1.100"/><path d="M0.500 2.500h5M3 0v5M17.500 16.300h5.500M20 13.800v5" stroke="#b83222" stroke-width="1.100"/><path d="M23.500 18v4h-4z" fill="#111"/></svg>
<svg class="abs" style="left:623px;top:38px" width="23" height="22" viewBox="0 0 23 22"><path d="M0 3h4M2 1v4M2 5v13h5M5.500 3h7.500v6M13 13v6" fill="none" stroke="#b83222" stroke-width="1.100"/><path d="M13 21l-2-3h4z" fill="#b83222"/><ellipse cx="6.500" cy="10.500" rx="2.700" ry="3.400" fill="#b8261a"/><ellipse cx="12.700" cy="10.500" rx="2.700" ry="3.400" fill="#b8261a"/><ellipse cx="18.300" cy="10.500" rx="2.300" ry="3" fill="#7a5a20"/><path d="M22.500 18v4h-4z" fill="#111"/></svg>
<div class="abs" style="left:647px;top:36.5px;width:26.5px;height:24.5px;background:linear-gradient(#d6d6d6,#e8e8e8);border:1px solid #707070;border-radius:3px"></div>
<svg class="abs" style="left:651px;top:40px" width="20" height="18" viewBox="0 0 20 18"><path d="M0.500 5.500l7-4.500 9.500 2.500-6.500 5z" fill="#fbd9a0" stroke="#b86a18" stroke-width=".8"/><path d="M0.500 5.500l10 3v8.500l-10-3.500z" fill="#f0a040" stroke="#b86a18" stroke-width=".8"/><path d="M10.500 8.500l6.500-5v8.500l-6.500 5z" fill="#d87818" stroke="#b86a18" stroke-width=".8"/><path d="M19.500 17l-6.500-6.500" stroke="#2a4a9a" stroke-width="1.800"/><path d="M11.500 9l5 1.200-3.800 3.800z" fill="#2a4a9a"/></svg>
<div class="abs" style="left:675.5px;top:36px;width:1px;height:25px;background:#c6c6c6;"></div>
<div class="abs" style="left:676.5px;top:36px;width:1px;height:25px;background:#ffffff;"></div>
<div class="abs" style="left:679px;top:42px;width:2px;height:2px;background:#9a9a9a;"></div>
<div class="abs" style="left:679px;top:46px;width:2px;height:2px;background:#9a9a9a;"></div>
<div class="abs" style="left:679px;top:50px;width:2px;height:2px;background:#9a9a9a;"></div>
<div class="abs" style="left:679px;top:54px;width:2px;height:2px;background:#9a9a9a;"></div>
<svg class="abs" style="left:686px;top:39px" width="20" height="20" viewBox="0 0 20 20"><path d="M0.700 6h13v13h-13zM0.700 6l5.500-5.300h13l-5.500 5.300M19.200 0.700v13l-5.500 5.300" fill="none" stroke="#8a6a18" stroke-width="1.200"/><path d="M6.200 0.700v13h13M6.200 13.700l-5.500 5.300" fill="none" stroke="#8a6a18" stroke-width="1"/></svg>
<svg class="abs" style="left:712px;top:39px" width="20" height="20" viewBox="0 0 20 20"><path d="M0.700 6h13v13h-13zM0.700 6l5.500-5.300h13l-5.500 5.300M19.200 0.700v13l-5.500 5.300" fill="#fbfbf6" stroke="#6a5418" stroke-width="1.200"/></svg>
<svg class="abs" style="left:737.5px;top:39px" width="20" height="20" viewBox="0 0 20 20"><path d="M0.700 6l5.500-5.300h13l-5.500 5.300z" fill="#fbe9a0" stroke="#8a6a18"/><path d="M0.700 6h13v13h-13z" fill="url(#gyc)" stroke="#8a6a18"/><path d="M13.700 6l5.500-5.300v13l-5.500 5.300z" fill="#d8a830" stroke="#8a6a18"/><defs><linearGradient id="gyc" x1="0" y1="0" x2="0" y2="1"><stop offset="0" stop-color="#fbe28a"/><stop offset="1" stop-color="#eec250"/></linearGradient></defs></svg>
<div class="abs" style="left:761px;top:36px;width:1px;height:25px;background:#c6c6c6;"></div>
<div class="abs" style="left:762px;top:36px;width:1px;height:25px;background:#ffffff;"></div>
<div class="abs" style="left:764.5px;top:42px;width:2px;height:2px;background:#9a9a9a;"></div>
<div class="abs" style="left:764.5px;top:46px;width:2px;height:2px;background:#9a9a9a;"></div>
<div class="abs" style="left:764.5px;top:50px;width:2px;height:2px;background:#9a9a9a;"></div>
<div class="abs" style="left:764.5px;top:54px;width:2px;height:2px;background:#9a9a9a;"></div>
<svg class="abs" style="left:772px;top:39px" width="20" height="20" viewBox="0 0 20 20"><path d="M0.700 6l5.500-5.300h13l-5.500 5.300z" fill="#b0bce0" stroke="#2a3a7a"/><path d="M0.700 6h13v13h-13z" fill="#8a9ad0" stroke="#2a3a7a"/><path d="M13.700 6l5.500-5.300v13l-5.500 5.300z" fill="#6a7ab8" stroke="#2a3a7a"/><path d="M5 6v13M9.400 6v13M0.700 10.300h13M0.700 14.600h13M5 6l5.500-5.300M9.400 6l5.500-5.300M3.400 3.400h13M15.500 4.200v13M17.400 2.400v13M13.700 10.300l5.500-5.300M13.700 14.600l5.500-5.300" stroke="#2a3a7a" stroke-width=".8" fill="none"/></svg>
<svg class="abs" style="left:798px;top:39px" width="21" height="20" viewBox="0 0 21 20"><path d="M0.700 6l5.500-5.300h13.500l-5.500 5.300z" fill="#c0c4e8"/><path d="M0.700 6h13.500v13h-13.500z" fill="#aab0e0"/><path d="M14.200 6l5.500-5.300v13l-5.500 5.300z" fill="#9098d0"/><path d="M0.700 6h13.500v13h-13.500zM0.700 6l5.500-5.300h13.500l-5.500 5.300M19.700 0.700v13l-5.500 5.300" fill="none" stroke="#c82828" stroke-width="1.300" stroke-dasharray="2.200 1.600"/></svg>
<svg class="abs" style="left:824.5px;top:39px" width="22" height="20" viewBox="0 0 22 20"><path d="M0.700 6l5.500-5.300h15l-5.500 5.300z" fill="#7ac070" stroke="#1a6a1a"/><path d="M0.700 6h15v13h-15z" fill="#3a9a3a" stroke="#1a6a1a"/><path d="M15.700 6l5.500-5.300v13l-5.500 5.300z" fill="#2a7a2a" stroke="#1a6a1a"/><path d="M4 9h8.500v7h-8.500z" fill="#b8d8a0" stroke="#1a6a1a"/></svg>
<div class="abs" style="left:344px;top:63px;width:3px;height:29px;background:#ffffff;"></div>
<div class="abs" style="left:347px;top:63px;width:61px;height:28px;background:linear-gradient(#f8f8f8,#ececec);border-right:1px solid #d0d0d0;border-bottom:1px solid #a8a8a8"></div>
<div class="abs" style="left:408px;top:63px;width:20px;height:29px;background:#fbfbfb;"></div>
<div class="abs" style="left:428px;top:63px;width:418px;height:28px;background:linear-gradient(#fcfcfc,#eaeaea);border-left:1px solid #dcdcdc;border-bottom:1px solid #a8a8a8"></div>
<div class="abs" style="left:350px;top:69px;width:2px;height:2px;background:#9a9a9a;"></div>
<div class="abs" style="left:350px;top:73px;width:2px;height:2px;background:#9a9a9a;"></div>
<div class="abs" style="left:350px;top:77px;width:2px;height:2px;background:#9a9a9a;"></div>
<div class="abs" style="left:350px;top:81px;width:2px;height:2px;background:#9a9a9a;"></div>
<svg class="abs" style="left:360px;top:66px" width="19" height="23" viewBox="0 0 19 23"><path d="M0.600 2.500h8.500v16h-8.500z" fill="url(#gl1)" stroke="#4a3410" stroke-width="1.100"/><path d="M9.100 11h8.500v7.500h-8.500z" fill="#fdfdfd" stroke="#333" stroke-width="1.100"/><path d="M10.300 0v23" stroke="#d02020" stroke-width="1.500" stroke-dasharray="2 1.500"/><circle cx="10.300" cy="12" r="1.500" fill="#b01818"/><circle cx="10.300" cy="17.500" r="1.500" fill="#b01818"/><defs><linearGradient id="gl1" x1="0" y1="0" x2="1" y2="1"><stop offset="0" stop-color="#f0c060"/><stop offset="1" stop-color="#d09830"/></linearGradient></defs></svg>
<svg class="abs" style="left:384.5px;top:67.5px" width="22" height="18" viewBox="0 0 22 18"><path d="M0.500 17.500v-15q0-2 2-2h16q2 0 2 2v15z" fill="#f1ead0" stroke="#8a8466" stroke-width=".9"/><path d="M0.500 5v-2.500q0-2 2-2h16q2 0 2 2v2.500z" fill="#1f6cba" stroke="#1a4f90" stroke-width=".8"/><path d="M3 2.500h3" stroke="#dfeaf8" stroke-width="1"/><path d="M3 7.500h4M9 7.500h9M3 10h4M9 10h9M3 12.300h4M9 12.300h9" stroke="#6a6a6a" stroke-width="1.100"/><path d="M2.500 15.500h4.500M8.300 15.500h4.500M14.200 15.500h4.500" stroke="#8c7c48" stroke-width="2.300"/></svg>
<div class="abs" style="left:430.5px;top:69px;width:2px;height:2px;background:#9a9a9a;"></div>
<div class="abs" style="left:430.5px;top:73px;width:2px;height:2px;background:#9a9a9a;"></div>
<div class="abs" style="left:430.5px;top:77px;width:2px;height:2px;background:#9a9a9a;"></div>
<div class="abs" style="left:430.5px;top:81px;width:2px;height:2px;background:#9a9a9a;"></div>
<svg class="abs" style="left:437.5px;top:69.5px" width="21" height="15" viewBox="0 0 21 15"><defs><radialGradient id="gor" cx=".4" cy=".35" r=".75"><stop offset="0" stop-color="#fbd9a0"/><stop offset="1" stop-color="#e08a18"/></radialGradient></defs><circle cx="13.500" cy="7.500" r="6.800" fill="url(#gor)" stroke="#4a3a2a" stroke-width=".9"/><circle cx="7.500" cy="7.500" r="6.800" fill="#fff" fill-opacity=".55" stroke="#333" stroke-width=".9"/></svg>
<svg class="abs" style="left:463px;top:69.5px" width="21" height="15" viewBox="0 0 21 15"><circle cx="7.500" cy="7.500" r="6.800" fill="url(#gor)" stroke="#4a3a2a" stroke-width=".9"/><circle cx="13.500" cy="7.500" r="6.800" fill="#fff" fill-opacity=".55" stroke="#333" stroke-width=".9"/></svg>
<svg class="abs" style="left:493px;top:69.5px" width="15" height="15" viewBox="0 0 15 15"><circle cx="7.500" cy="7.500" r="6.800" fill="url(#gor)" stroke="#8a5a18" stroke-width=".9"/></svg>
<svg class="abs" style="left:515px;top:65.5px" width="22" height="22" viewBox="0 0 22 22"><rect x="0.600" y="0.600" width="20.800" height="20.800" fill="#f3b868" stroke="#111" stroke-width="1.200"/><path d="M0.600 0.600h20.800l-20.800 20.800z" fill="#fffaf0"/><path d="M0.600 21.400L21.400 0.600" stroke="#8a5a20" stroke-width=".6"/><path d="M16.500 18.500c1-5-1.500-9-6.500-10.500l1.800-2.800-8.300 1.300 4.800 6 1-2.600c3 1.600 5.800 4.600 7.200 8.600z" fill="#111"/></svg>
<svg class="abs" style="left:544px;top:69px" width="17" height="17" viewBox="0 0 17 17"><path d="M3.500 5.500c4-4 9.500-3 11.500 1.500 1.500 4-1 8-4.500 9" fill="none" stroke="#b0b0b0" stroke-width="1.500"/><path d="M1 1.500l0.800 6.500 6-1.800z" fill="#b0b0b0"/></svg>
<svg class="abs" style="left:570px;top:69px" width="17" height="17" viewBox="0 0 17 17"><path d="M13.500 5.500c-4-4-9.500-3-11.500 1.500-1.500 4 1 8 4.500 9" fill="none" stroke="#b0b0b0" stroke-width="1.500"/><path d="M16 1.500l-0.800 6.500-6-1.800z" fill="#b0b0b0"/></svg>
<svg class="abs" style="left:593.5px;top:66.5px" width="22" height="20" viewBox="0 0 22 20"><g stroke="#9a6a20" stroke-width=".9"><rect x="0.500" y="0.500" width="8" height="6" fill="#f2c878"/><rect x="0.500" y="8.500" width="11" height="11" fill="#ebb858"/><rect x="16.500" y="13.500" width="5" height="6" fill="#ebb858"/></g></svg>
<svg class="abs" style="left:619px;top:67.5px" width="22" height="18" viewBox="0 0 22 18"><path d="M0.500 17.500v-15q0-2 2-2h16q2 0 2 2v15z" fill="#f1ead0" stroke="#8a8466" stroke-width=".9"/><path d="M0.500 5v-2.500q0-2 2-2h16q2 0 2 2v2.500z" fill="#1f6cba" stroke="#1a4f90" stroke-width=".8"/><path d="M3 2.500h3" stroke="#dfeaf8" stroke-width="1"/><path d="M3 7.500h4M9 7.500h9M3 10h4M9 10h9M3 12.300h4M9 12.300h9" stroke="#6a6a6a" stroke-width="1.100"/><path d="M2.500 15.500h4.500M8.300 15.500h4.500M14.200 15.500h4.500" stroke="#8c7c48" stroke-width="2.300"/></svg>
<div class="abs" style="left:644px;top:64px;width:1px;height:27px;background:#c6c6c6;"></div>
<div class="abs" style="left:649px;top:69px;width:2px;height:2px;background:#9a9a9a;"></div>
<div class="abs" style="left:649px;top:73px;width:2px;height:2px;background:#9a9a9a;"></div>
<div class="abs" style="left:649px;top:77px;width:2px;height:2px;background:#9a9a9a;"></div>
<div class="abs" style="left:649px;top:81px;width:2px;height:2px;background:#9a9a9a;"></div>
<svg class="abs" style="left:654px;top:68.5px" width="22" height="17" viewBox="0 0 22 17"><path d="M9 0.600c6.500-1 12.500 2.500 12.500 7.500 0 3-2.500 4-5 3.500-2.500-.500-4 1-3 2.800 1 2-1.500 2.600-4.500 2.400C3.500 16.400 0.500 13 0.500 8.500 0.500 4 4 1.300 9 0.600z" fill="#ecc98a" stroke="#6a4a20" stroke-width=".9"/><circle cx="6.500" cy="4.800" r="2.300" fill="#d02020"/><circle cx="12.500" cy="3.800" r="2.300" fill="#e8d020"/><circle cx="17.500" cy="7.200" r="2.300" fill="#20207a"/><circle cx="15" cy="13" r="2.300" fill="#1a7a2a"/><ellipse cx="5" cy="10.800" rx="2.300" ry="1.800" fill="#2a2a2a"/></svg>
<div class="abs" style="left:679.5px;top:64.5px;width:144.5px;height:23.5px;background:linear-gradient(90deg,#d4ecd6,#cce8cf 40%,#e6f2e6 88%);border:1px solid #8c8c8c;border-top-color:#666;border-left-color:#666"></div>
<span class="t" style="left:683.7px;top:69.17px;font-size:13.5px;line-height:13.5px;color:#111;transform:scaleX(0.9457);">Assembly defaults</span>
<div class="abs" style="left:812px;top:66.5px;width:10.5px;height:20px;background:linear-gradient(#f6f6f6,#d2d2d2);border:1px solid #4a4a4a"></div>
<svg class="abs" style="left:812px;top:66.5px" width="10.5" height="20" viewBox="0 0 10.5 20"><path d="M1.75 8.0 h7 l-3.5 4.5z" fill="#111"/></svg>
<svg class="abs" style="left:828.5px;top:66px" width="20" height="21" viewBox="0 0 20 21"><path d="M0.700 7l6-6.300h13l-6 6.300z" fill="#d8bc80" stroke="#7a5a18"/><path d="M0.700 7h13v13h-13z" fill="#ccaa68" stroke="#7a5a18"/><path d="M13.700 7l6-6.300v13l-6 6.300z" fill="#b89450" stroke="#7a5a18"/><path d="M6.700 0.700v13h13M6.700 13.700l-6 6.300" fill="none" stroke="#7a5a18" stroke-width=".8"/></svg>
<div class="abs" style="left:346px;top:240px;width:58px;height:1px;background:#c2c2c2;"></div>
<div class="abs" style="left:346px;top:303px;width:58px;height:1px;background:#c2c2c2;"></div>
<div class="abs" style="left:346px;top:366px;width:58px;height:1px;background:#c2c2c2;"></div>
<svg class="abs" style="left:352px;top:130px" width="20" height="20" viewBox="0 0 20 20"><defs><linearGradient id="gbl" x1="0" y1="0" x2="1" y2="1"><stop offset="0" stop-color="#c4d0e6"/><stop offset="1" stop-color="#7a8eb8"/></linearGradient></defs><path d="M0.600 3.500l2.500-2.900h6v9.500h9.500l-2.500 3v5.500h-15.500z" fill="url(#gbl)" stroke="#2a3658" stroke-width="1.100"/><path d="M0.600 3.500h6v9.600h9.500M6.600 3.500l2.500-2.900" fill="none" stroke="#2a3658" stroke-width=".8"/><path d="M12 6.500c.500-2 1.500-3.500 3.500-4.300" fill="none" stroke="#c82020" stroke-width="1.200"/><path d="M17.500 0.500l-3.500.600 2 2.600z" fill="#c82020"/></svg>
<svg class="abs" style="left:381px;top:132px" width="17" height="17" viewBox="0 0 17 17"><rect x="0.0" y="0.0" width="3.300" height="3.300" fill="#26267a"/><rect x="0.0" y="6.8" width="3.300" height="3.300" fill="#26267a"/><rect x="0.0" y="13.6" width="3.300" height="3.300" fill="#26267a"/><rect x="6.8" y="0.0" width="3.300" height="3.300" fill="#26267a"/><rect x="6.8" y="6.8" width="3.300" height="3.300" fill="#26267a"/><rect x="6.8" y="13.6" width="3.300" height="3.300" fill="#26267a"/><rect x="13.6" y="0.0" width="3.300" height="3.300" fill="#26267a"/><rect x="13.6" y="6.8" width="3.300" height="3.300" fill="#26267a"/><rect x="13.6" y="13.6" width="3.300" height="3.300" fill="#26267a"/></svg>
<svg class="abs" style="left:351px;top:159px" width="20" height="20" viewBox="0 0 20 20"><rect x="15.9" y="8.1" width="3.200" height="3.200" fill="#26267a"/><rect x="13.6" y="13.8" width="3.200" height="3.200" fill="#26267a"/><rect x="7.9" y="16.1" width="3.200" height="3.200" fill="#26267a"/><rect x="2.2" y="13.8" width="3.200" height="3.200" fill="#26267a"/><rect x="-0.1" y="8.1" width="3.200" height="3.200" fill="#26267a"/><rect x="2.2" y="2.4" width="3.200" height="3.200" fill="#26267a"/><rect x="7.9" y="0.1" width="3.200" height="3.200" fill="#26267a"/><rect x="13.6" y="2.4" width="3.200" height="3.200" fill="#26267a"/></svg>
<svg class="abs" style="left:378px;top:158px" width="23" height="22" viewBox="0 0 23 22"><path d="M9.300 0.600h4v5h8.500v4h-12.500z" fill="url(#gbl)" stroke="#2a2a3a" stroke-width=".9" stroke-dasharray="2.500 1.300"/><path d="M0.600 11.500h4v5h8v4h-12z" fill="url(#gbl)" stroke="#3a4a78" stroke-width=".9"/><path d="M1.500 19.500l7.500-7.500" stroke="#1a6ac8" stroke-width="1.600"/><path d="M10.500 10.500l-4.200 1 3.200 3.200z" fill="#1a6ac8"/></svg>
<svg class="abs" style="left:351px;top:186px" width="22" height="21" viewBox="0 0 22 21"><path d="M10 0.600h10.500v4.500h-6v8h-4.500z" fill="#c8d2e6" stroke="#5a6a98" stroke-width=".9" stroke-dasharray="2 1.300"/><path d="M0.600 9.500h4.500v6.500h9.500v4.500h-14z" fill="url(#gbl)" stroke="#3a4a78" stroke-width=".9"/><path d="M2.500 8c0-3.500 2-5.500 5.500-5.500" fill="none" stroke="#1a6ac8" stroke-width="1.400"/><path d="M9.500 2.500l-3-2v4z" fill="#1a6ac8"/><path d="M2.500 9.500l-2-3h4z" fill="#1a6ac8"/><path d="M9 9.500h-4" stroke="#1a6ac8" stroke-width="1.200"/></svg>
<svg class="abs" style="left:380px;top:185px" width="20" height="22" viewBox="0 0 20 22"><path d="M0.600 9.500h4.500v7h13v5h-17.500z" fill="url(#gbl)" stroke="#3a4a78" stroke-width=".9"/><path d="M11 8v8" stroke="#1a5ac0" stroke-width="1.500"/><path d="M11 18l-2.500-3.500h5z" fill="#1a5ac0"/><circle cx="11" cy="4.500" r="3.800" fill="#3aaa3a" stroke="#1a6a1a" stroke-width=".8"/></svg>
<svg class="abs" style="left:351px;top:217px" width="22" height="18" viewBox="0 0 22 18"><path d="M0.600 4.500l6-3.900v11l-6 3.900z" fill="#3aaa3a" stroke="#1a6a1a" stroke-width=".8"/><path d="M9 8.500l4-2.500v8l-4 2.500z" fill="#3aaa3a" stroke="#1a6a1a" stroke-width=".8"/><path d="M13 6h7v5h-4" fill="#fff" stroke="#5a6a98" stroke-width=".9"/><path d="M14.500 14.500l4.500-4" stroke="#1a6ac8" stroke-width="1.300"/><path d="M13.500 15.500l.800-3.300 2.500 2.500z" fill="#1a6ac8"/></svg>
<svg class="abs" style="left:368px;top:232px" width="5" height="5" viewBox="0 0 5 5"><path d="M4.800 1.200v3.600h-3.600z" fill="#111"/></svg>
<svg class="abs" style="left:379px;top:217.5px" width="21" height="15" viewBox="0 0 21 15"><circle cx="7.500" cy="7.500" r="6.800" fill="#aeb8d0" stroke="#3a4466" stroke-width="1"/><circle cx="13.500" cy="7.500" r="6.800" fill="#dfe4ee" fill-opacity=".75" stroke="#3a4466" stroke-width="1"/></svg>
<svg class="abs" style="left:352px;top:249px" width="18" height="21" viewBox="0 0 18 21"><defs><linearGradient id="gtan" x1="0" y1="0" x2="1" y2="1"><stop offset="0" stop-color="#f4dea0"/><stop offset="1" stop-color="#d6a848"/></linearGradient></defs><path d="M5 0.600h6v12h-6z" fill="url(#gtan)" stroke="#7a5a18" stroke-width=".9"/><path d="M0.600 12.500h16.500v7.500h-16.500z" fill="url(#gtan)" stroke="#7a5a18" stroke-width=".9"/><path d="M5 4h6M13.500 3v9" stroke="#d02020" stroke-width="1.300" stroke-dasharray="2 1.300"/></svg>
<svg class="abs" style="left:366px;top:267px" width="5" height="5" viewBox="0 0 5 5"><path d="M4.800 1.200v3.600h-3.600z" fill="#111"/></svg>
<svg class="abs" style="left:377.5px;top:249px" width="22" height="21" viewBox="0 0 22 21"><path d="M4 0.600h5v12h-5z" fill="url(#gtan)" stroke="#7a5a18" stroke-width=".9"/><path d="M0.600 12.500h10.500v7.500h-10.500z" fill="url(#gtan)" stroke="#7a5a18" stroke-width=".9"/><path d="M13 12.500h8.500v7.500h-8.500z" fill="url(#gtan)" stroke="#7a5a18" stroke-width=".9"/><path d="M11 7h6" stroke="#d02020" stroke-width="1.600"/><path d="M19.500 7l-3.500-2.500v5z" fill="#d02020"/></svg>
<svg class="abs" style="left:397px;top:267px" width="5" height="5" viewBox="0 0 5 5"><path d="M4.800 1.200v3.600h-3.600z" fill="#111"/></svg>
<svg class="abs" style="left:352px;top:276px" width="20" height="23" viewBox="0 0 20 23"><path d="M0.600 15.500h17.500v6.500h-17.500z" fill="url(#gtan)" stroke="#7a5a18" stroke-width=".9"/><path d="M4 6.500h6v9h-6z" fill="none" stroke="#333" stroke-width="1" stroke-dasharray="2 1.300"/><path d="M6.500 8.500l9-8 4 4.500-9 8z" fill="#eec278" stroke="#7a5a18" stroke-width=".9"/><path d="M6.500 8.500l3-2.700 4 4.500-3 2.700z" fill="#e8a0a8" stroke="#8a4a50" stroke-width=".8"/></svg>
<svg class="abs" style="left:350px;top:312px" width="23" height="21" viewBox="0 0 23 21"><path d="M0 5h22" stroke="#111" stroke-width="1.300" stroke-dasharray="5 2"/><path d="M8 1v8M4 5h8" stroke="#1a6ac8" stroke-width="1.700"/><path d="M12.500 8v10.500l2.800-2.300 2 4.300 2-1-2-4.200h3.700z" fill="#fff" stroke="#111" stroke-width="1.100" stroke-linejoin="round"/></svg>
<svg class="abs" style="left:368px;top:329px" width="5" height="5" viewBox="0 0 5 5"><path d="M4.800 1.200v3.600h-3.600z" fill="#111"/></svg>
<svg class="abs" style="left:379.5px;top:315px" width="20" height="18" viewBox="0 0 20 18"><path d="M0.600 0.600h6.500v9h12v7h-18.500z" fill="url(#gtan)" stroke="#7a5a18" stroke-width=".9"/><circle cx="4" cy="12.500" r="2.600" fill="none" stroke="#d02020" stroke-width="1.300"/></svg>
<svg class="abs" style="left:397px;top:329px" width="5" height="5" viewBox="0 0 5 5"><path d="M4.800 1.200v3.600h-3.600z" fill="#111"/></svg>
<svg class="abs" style="left:352px;top:340px" width="20" height="22" viewBox="0 0 20 22"><path d="M0.600 5l4-4.400h5v9h9.500l-2.500 3.500v8h-16z" fill="url(#gtan)" stroke="#7a5a18" stroke-width=".9"/><path d="M0.600 5h5.500v8.500h10.500M6.100 5l3.500-4.400" fill="none" stroke="#7a5a18" stroke-width=".8"/><ellipse cx="12" cy="17" rx="2.200" ry="3.600" fill="#f0a070" stroke="#d02020" stroke-width="1.200"/><path d="M2 8v10M4 8v10" stroke="#b88a38" stroke-width=".6" stroke-dasharray="1 1.500"/></svg>
<svg class="abs" style="left:368px;top:359px" width="5" height="5" viewBox="0 0 5 5"><path d="M4.800 1.200v3.600h-3.600z" fill="#111"/></svg>
<svg class="abs" style="left:379.5px;top:340px" width="22" height="23" viewBox="0 0 22 23"><path d="M0.600 0.600h6v10h9.500v5.500h-15.500z" fill="url(#gtan)" stroke="#7a5a18" stroke-width=".9"/><path d="M11 6.500l6.500 10M17 7.500l-4 9" stroke="#555" stroke-width="1.200"/><circle cx="12.500" cy="19" r="2.300" fill="none" stroke="#c82020" stroke-width="1.300"/><circle cx="18.500" cy="18.500" r="2.300" fill="none" stroke="#c82020" stroke-width="1.300"/></svg>
<span class="t" style="left:349.7px;top:378.73px;font-size:8px;line-height:8px;color:#111;font-weight:bold;transform:scaleX(1.0772);">(XYZ)</span>
<svg class="abs" style="left:357.2px;top:387.1px" width="7" height="7" viewBox="0 0 7 7"><path d="M3.500 0v7M0 3.500h7" stroke="#1a6ac8" stroke-width="1.500"/></svg>
<svg class="abs" style="left:368px;top:392px" width="5" height="5" viewBox="0 0 5 5"><path d="M4.800 1.200v3.600h-3.600z" fill="#111"/></svg>
<svg class="abs" style="left:380.5px;top:375px" width="20" height="21" viewBox="0 0 20 21"><path d="M8 20.500v-20" stroke="#1a5ab8" stroke-width="1.500"/><path d="M8 2.500l-2.600 4h5.200z" fill="#1a5ab8"/><path d="M8 12l-6.500 6.500M8 12l6.500 6.500" stroke="#222" stroke-width="1.600"/><path d="M0 20l1-4.200 3.200 3.200zM16 20l-1-4.200-3.200 3.200z" fill="#222"/></svg>
<svg class="abs" style="left:397px;top:392px" width="5" height="5" viewBox="0 0 5 5"><path d="M4.800 1.200v3.600h-3.600z" fill="#111"/></svg>
<svg class="abs" style="left:350px;top:402.5px" width="21" height="23" viewBox="0 0 21 23"><path d="M4.500 7v-4.500M4.500 7l-3.500 3.500M4.500 7l6 1" stroke="#222" stroke-width="1.300"/><path d="M4.500 0.500l-1.700 2.800h3.400zM0 11.500l.800-3.300 2.300 2.300zM11.500 8.300l-3-1.500-.300 2.500z" fill="#222"/><path d="M13 6l6.500-5v11.500l-6.500 5.500z" fill="url(#gpl)" stroke="#9a9aa8" stroke-width=".8"/><defs><linearGradient id="gpl" x1="0" y1="0" x2="0" y2="1"><stop offset="0" stop-color="#ecd484"/><stop offset="1" stop-color="#b8b4a8"/></linearGradient></defs><path d="M2 18.200h8.500" stroke="#222" stroke-width="1.400"/><path d="M0 18.200l3-2.300v4.600zM12.500 18.200l-3-2.300v4.600z" fill="#222"/></svg>
<svg class="abs" style="left:368px;top:421px" width="5" height="5" viewBox="0 0 5 5"><path d="M4.800 1.200v3.600h-3.600z" fill="#111"/></svg>
<svg class="abs" style="left:380px;top:402.5px" width="22" height="23" viewBox="0 0 22 23"><path d="M6 5.500v3.500M6 14.500l-4.500 3.500M6 14.500l5 3.500" stroke="#1a5ab8" stroke-width="1.700"/><path d="M6 10.500l-2-2.500h4zM0 19.500l1-3.200 2.300 2.300zM12.500 19.500l-1-3.200-2.300 2.300z" fill="#1a5ab8"/><path d="M6 0v4M4 2h4M4 13h4M14 18v5M11.500 20.500h5" stroke="#c83030" stroke-width="1.200"/></svg>
<svg class="abs" style="left:397px;top:421px" width="5" height="5" viewBox="0 0 5 5"><path d="M4.800 1.200v3.600h-3.600z" fill="#111"/></svg>
<svg class="abs" style="left:406px;top:123px;overflow:hidden" width="440" height="460" viewBox="406 123 440 460"><polygon points="621.0,252.4 630.0,244.8 633.0,245.4 743.0,291.0 735.5,385.0 728.0,478.0 699.0,456.6 688.7,462.5 631.5,424.0 630.2,399.0 626.7,398.0 626.7,387.0 628.0,386.5 625.7,332.4 621.8,329.5 621.8,317.7 624.4,317.0" fill="#3c9b42" stroke="#071407" stroke-width="1.2" stroke-linejoin="round"/><polygon points="651.0,333.0 733.0,372.0 727.0,476.0 654.0,430.0" fill="#3c9b42"/><polygon points="621.0,252.4 632.0,245.5 743.0,291.0 719.5,295.6" fill="#42a044"/><polygon points="621.0,252.4 719.5,295.6 715.6,367.3 621.8,329.5" fill="#3c9a40"/><polygon points="719.5,295.6 732.3,289.7 729.3,368.3 715.6,367.3" fill="#2d7a33"/><polygon points="732.3,289.7 743.0,291.0 733.0,420.0 730.0,420.0" fill="#3a9038"/><polygon points="701.0,361.0 716.5,368.0 729.5,369.0 730.0,385.0" fill="#3c9a40"/><polygon points="625.7,332.4 637.0,337.0 639.5,393.0 628.0,386.5" fill="#3c9a40"/><polygon points="637.0,337.0 651.0,333.5 652.0,398.0 639.5,393.0" fill="#2d7a33"/><polygon points="630.2,399.0 639.5,392.0 698.4,428.0 689.0,440.0" fill="#42a044"/><polygon points="630.2,399.0 689.0,440.0 688.7,462.5 631.5,424.0" fill="#3c9a40"/><polygon points="689.0,440.0 698.4,428.0 699.0,456.6 688.7,462.5" fill="#2d7a33"/><path d="M651.0 333.0L667.5 340.9M651.0 333.0L651.5 350.3M667.5 340.9L651.5 350.3M651.5 350.3L661.3 356.9M651.5 350.3L652.1 368.9M651.5 350.3L667.4 373.1M652.1 368.9L667.4 373.1M652.1 368.9L652.6 384.0M667.4 373.1L652.6 384.0M652.6 384.0L664.0 385.8M652.6 384.0L652.9 395.2M664.0 385.8L652.9 395.2M652.9 395.2L663.9 403.4M652.9 395.2L653.4 412.0M652.9 395.2L666.0 421.8M653.4 412.0L666.0 421.8M653.4 412.0L654.0 430.0M666.0 421.8L654.0 430.0M654.0 430.0L669.5 439.8M667.5 340.9L680.6 347.1M667.5 340.9L661.3 356.9M680.6 347.1L661.3 356.9M661.3 356.9L679.2 367.6M661.3 356.9L667.4 373.1M679.2 367.6L667.4 373.1M667.4 373.1L676.2 374.9M667.4 373.1L664.0 385.8M676.2 374.9L664.0 385.8M664.0 385.8L679.2 391.9M664.0 385.8L663.9 403.4M664.0 385.8L675.0 410.5M663.9 403.4L675.0 410.5M663.9 403.4L666.0 421.8M663.9 403.4L678.1 432.5M666.0 421.8L678.1 432.5M666.0 421.8L669.5 439.8M678.1 432.5L669.5 439.8M669.5 439.8L679.2 445.9M680.6 347.1L692.1 352.6M680.6 347.1L679.2 367.6M692.1 352.6L679.2 367.6M679.2 367.6L691.8 366.9M679.2 367.6L676.2 374.9M679.2 367.6L687.9 381.2M676.2 374.9L687.9 381.2M676.2 374.9L679.2 391.9M687.9 381.2L679.2 391.9M679.2 391.9L692.7 400.7M679.2 391.9L675.0 410.5M692.7 400.7L675.0 410.5M675.0 410.5L690.1 414.3M675.0 410.5L678.1 432.5M690.1 414.3L678.1 432.5M678.1 432.5L693.1 434.4M678.1 432.5L679.2 445.9M678.1 432.5L688.9 452.0M679.2 445.9L688.9 452.0M692.1 352.6L708.6 360.4M692.1 352.6L691.8 366.9M692.1 352.6L705.1 379.3M691.8 366.9L705.1 379.3M691.8 366.9L687.9 381.2M691.8 366.9L705.6 395.7M687.9 381.2L705.6 395.7M687.9 381.2L692.7 400.7M687.9 381.2L701.2 408.6M692.7 400.7L701.2 408.6M692.7 400.7L690.1 414.3M701.2 408.6L690.1 414.3M690.1 414.3L703.6 430.3M690.1 414.3L693.1 434.4M690.1 414.3L702.2 444.1M693.1 434.4L702.2 444.1M693.1 434.4L688.9 452.0M702.2 444.1L688.9 452.0M688.9 452.0L699.7 458.8M708.6 360.4L718.5 365.1M708.6 360.4L705.1 379.3M708.6 360.4L717.4 378.6M705.1 379.3L717.4 378.6M705.1 379.3L705.6 395.7M717.4 378.6L705.6 395.7M705.6 395.7L720.2 399.8M705.6 395.7L701.2 408.6M705.6 395.7L720.5 419.7M701.2 408.6L720.5 419.7M701.2 408.6L703.6 430.3M701.2 408.6L717.0 435.8M703.6 430.3L717.0 435.8M703.6 430.3L702.2 444.1M703.6 430.3L717.0 448.6M702.2 444.1L717.0 448.6M702.2 444.1L699.7 458.8M702.2 444.1L714.4 468.1M699.7 458.8L714.4 468.1M718.5 365.1L733.0 372.0M718.5 365.1L717.4 378.6M733.0 372.0L717.4 378.6M717.4 378.6L732.1 386.8M717.4 378.6L720.2 399.8M732.1 386.8L720.2 399.8M720.2 399.8L731.1 405.7M720.2 399.8L720.5 419.7M720.2 399.8L730.2 420.1M720.5 419.7L730.2 420.1M720.5 419.7L717.0 435.8M730.2 420.1L717.0 435.8M717.0 435.8L728.7 445.9M717.0 435.8L717.0 448.6M728.7 445.9L717.0 448.6M717.0 448.6L728.2 455.9M717.0 448.6L714.4 468.1M717.0 448.6L727.0 476.0M714.4 468.1L727.0 476.0M733.0 372.0L732.1 386.8M732.1 386.8L731.1 405.7M731.1 405.7L730.2 420.1M730.2 420.1L728.7 445.9M728.7 445.9L728.2 455.9M728.2 455.9L727.0 476.0M621.0 252.4L632.0 245.5M621.0 252.4L632.5 257.4M632.0 245.5L632.5 257.4M632.5 257.4L640.9 249.2M632.5 257.4L644.0 262.5M640.9 249.2L644.0 262.5M644.0 262.5L658.4 256.3M644.0 262.5L652.9 266.4M658.4 256.3L652.9 266.4M652.9 266.4L671.1 261.5M652.9 266.4L664.9 271.7M652.9 266.4L678.8 264.7M664.9 271.7L678.8 264.7M664.9 271.7L677.3 277.1M664.9 271.7L693.1 270.5M677.3 277.1L693.1 270.5M677.3 277.1L689.2 282.3M677.3 277.1L708.2 276.7M689.2 282.3L708.2 276.7M689.2 282.3L695.5 285.1M689.2 282.3L715.0 279.5M695.5 285.1L715.0 279.5M695.5 285.1L711.2 292.0M695.5 285.1L731.6 286.3M711.2 292.0L731.6 286.3M711.2 292.0L719.5 295.6M731.6 286.3L719.5 295.6M719.5 295.6L743.0 291.0M632.0 245.5L640.9 249.2M640.9 249.2L658.4 256.3M658.4 256.3L671.1 261.5M671.1 261.5L678.8 264.7M678.8 264.7L693.1 270.5M693.1 270.5L708.2 276.7M708.2 276.7L715.0 279.5M715.0 279.5L731.6 286.3M731.6 286.3L743.0 291.0M621.0 252.4L636.6 259.3M621.0 252.4L621.1 265.8M621.0 252.4L633.5 270.7M621.1 265.8L633.5 270.7M621.1 265.8L621.3 276.9M633.5 270.7L621.3 276.9M621.3 276.9L636.1 286.2M621.3 276.9L621.4 289.3M636.1 286.2L621.4 289.3M621.4 289.3L634.0 295.7M621.4 289.3L621.6 307.1M634.0 295.7L621.6 307.1M621.6 307.1L636.0 309.2M621.6 307.1L621.7 316.3M636.0 309.2L621.7 316.3M621.7 316.3L636.3 319.6M621.7 316.3L621.8 329.5M621.7 316.3L633.1 334.0M621.8 329.5L633.1 334.0M636.6 259.3L645.8 263.3M636.6 259.3L633.5 270.7M645.8 263.3L633.5 270.7M633.5 270.7L648.7 275.4M633.5 270.7L636.1 286.2M648.7 275.4L636.1 286.2M636.1 286.2L647.6 290.6M636.1 286.2L634.0 295.7M647.6 290.6L634.0 295.7M634.0 295.7L646.9 302.6M634.0 295.7L636.0 309.2M634.0 295.7L648.5 313.8M636.0 309.2L648.5 313.8M636.0 309.2L636.3 319.6M636.0 309.2L644.6 323.9M636.3 319.6L644.6 323.9M636.3 319.6L633.1 334.0M644.6 323.9L633.1 334.0M633.1 334.0L642.3 337.8M645.8 263.3L656.0 267.7M645.8 263.3L648.7 275.4M645.8 263.3L660.6 284.7M648.7 275.4L660.6 284.7M648.7 275.4L647.6 290.6M660.6 284.7L647.6 290.6M647.6 290.6L655.0 293.2M647.6 290.6L646.9 302.6M655.0 293.2L646.9 302.6M646.9 302.6L657.3 306.7M646.9 302.6L648.5 313.8M646.9 302.6L658.4 317.7M648.5 313.8L658.4 317.7M648.5 313.8L644.6 323.9M648.5 313.8L660.2 332.2M644.6 323.9L660.2 332.2M644.6 323.9L642.3 337.8M644.6 323.9L657.8 344.0M642.3 337.8L657.8 344.0M656.0 267.7L671.2 274.4M656.0 267.7L660.6 284.7M671.2 274.4L660.6 284.7M660.6 284.7L667.9 282.4M660.6 284.7L655.0 293.2M660.6 284.7L669.1 300.4M655.0 293.2L669.1 300.4M655.0 293.2L657.3 306.7M655.0 293.2L671.6 313.7M657.3 306.7L671.6 313.7M657.3 306.7L658.4 317.7M657.3 306.7L666.6 325.4M658.4 317.7L666.6 325.4M658.4 317.7L660.2 332.2M666.6 325.4L660.2 332.2M660.2 332.2L670.9 339.4M660.2 332.2L657.8 344.0M670.9 339.4L657.8 344.0M657.8 344.0L668.9 348.5M671.2 274.4L685.4 280.7M671.2 274.4L667.9 282.4M671.2 274.4L679.2 287.1M667.9 282.4L679.2 287.1M667.9 282.4L669.1 300.4M667.9 282.4L678.6 300.9M669.1 300.4L678.6 300.9M669.1 300.4L671.6 313.7M678.6 300.9L671.6 313.7M671.6 313.7L679.9 313.4M671.6 313.7L666.6 325.4M671.6 313.7L681.7 325.6M666.6 325.4L681.7 325.6M666.6 325.4L670.9 339.4M666.6 325.4L681.4 338.8M670.9 339.4L681.4 338.8M670.9 339.4L668.9 348.5M670.9 339.4L681.6 353.6M668.9 348.5L681.6 353.6M685.4 280.7L691.6 283.4M685.4 280.7L679.2 287.1M685.4 280.7L693.0 299.4M679.2 287.1L693.0 299.4M679.2 287.1L678.6 300.9M679.2 287.1L694.1 311.4M678.6 300.9L694.1 311.4M678.6 300.9L679.9 313.4M694.1 311.4L679.9 313.4M679.9 313.4L694.5 322.5M679.9 313.4L681.7 325.6M694.5 322.5L681.7 325.6M681.7 325.6L691.0 333.2M681.7 325.6L681.4 338.8M681.7 325.6L689.5 346.5M681.4 338.8L689.5 346.5M681.4 338.8L681.6 353.6M681.4 338.8L695.2 359.1M681.6 353.6L695.2 359.1M691.6 283.4L709.6 291.3M691.6 283.4L693.0 299.4M709.6 291.3L693.0 299.4M693.0 299.4L703.6 299.8M693.0 299.4L694.1 311.4M693.0 299.4L705.0 311.2M694.1 311.4L705.0 311.2M694.1 311.4L694.5 322.5M694.1 311.4L706.3 328.8M694.5 322.5L706.3 328.8M694.5 322.5L691.0 333.2M694.5 322.5L703.6 340.4M691.0 333.2L703.6 340.4M691.0 333.2L689.5 346.5M691.0 333.2L706.5 348.8M689.5 346.5L706.5 348.8M689.5 346.5L695.2 359.1M706.5 348.8L695.2 359.1M695.2 359.1L705.6 363.3M709.6 291.3L719.5 295.6M709.6 291.3L703.6 299.8M709.6 291.3L718.7 310.1M703.6 299.8L718.7 310.1M703.6 299.8L705.0 311.2M703.6 299.8L718.3 317.5M705.0 311.2L718.3 317.5M705.0 311.2L706.3 328.8M718.3 317.5L706.3 328.8M706.3 328.8L717.5 331.9M706.3 328.8L703.6 340.4M717.5 331.9L703.6 340.4M703.6 340.4L716.8 344.3M703.6 340.4L706.5 348.8M703.6 340.4L716.2 356.1M706.5 348.8L716.2 356.1M706.5 348.8L705.6 363.3M706.5 348.8L715.6 367.3M705.6 363.3L715.6 367.3M719.5 295.6L718.7 310.1M718.7 310.1L718.3 317.5M718.3 317.5L717.5 331.9M717.5 331.9L716.8 344.3M716.8 344.3L716.2 356.1M716.2 356.1L715.6 367.3M719.5 295.6L726.9 292.2M719.5 295.6L718.7 310.1M726.9 292.2L718.7 310.1M718.7 310.1L726.5 306.0M718.7 310.1L718.2 318.7M726.5 306.0L718.2 318.7M718.2 318.7L724.4 314.8M718.2 318.7L717.5 332.9M724.4 314.8L717.5 332.9M717.5 332.9L724.2 332.0M717.5 332.9L717.0 340.7M724.2 332.0L717.0 340.7M717.0 340.7L722.5 341.2M717.0 340.7L716.2 356.9M717.0 340.7L723.1 357.0M716.2 356.9L723.1 357.0M716.2 356.9L715.6 367.3M723.1 357.0L715.6 367.3M715.6 367.3L724.0 367.9M726.9 292.2L732.3 289.7M726.9 292.2L726.5 306.0M726.9 292.2L731.9 300.1M726.5 306.0L731.9 300.1M726.5 306.0L724.4 314.8M731.9 300.1L724.4 314.8M724.4 314.8L731.4 313.6M724.4 314.8L724.2 332.0M731.4 313.6L724.2 332.0M724.2 332.0L730.7 331.2M724.2 332.0L722.5 341.2M730.7 331.2L722.5 341.2M722.5 341.2L730.3 343.2M722.5 341.2L723.1 357.0M722.5 341.2L729.7 356.8M723.1 357.0L729.7 356.8M723.1 357.0L724.0 367.9M723.1 357.0L729.3 368.3M724.0 367.9L729.3 368.3M732.3 289.7L731.9 300.1M731.9 300.1L731.4 313.6M731.4 313.6L730.7 331.2M730.7 331.2L730.3 343.2M730.3 343.2L729.7 356.8M729.7 356.8L729.3 368.3M732.3 289.7L736.6 290.2M732.3 289.7L732.1 300.1M736.6 290.2L732.1 300.1M732.1 300.1L737.7 304.2M732.1 300.1L732.0 308.6M732.1 300.1L735.6 313.1M732.0 308.6L735.6 313.1M732.0 308.6L731.7 324.4M732.0 308.6L736.8 325.4M731.7 324.4L736.8 325.4M731.7 324.4L731.5 333.4M736.8 325.4L731.5 333.4M731.5 333.4L734.8 331.0M731.5 333.4L731.4 343.3M731.5 333.4L736.2 342.2M731.4 343.3L736.2 342.2M731.4 343.3L731.1 355.1M731.4 343.3L733.9 355.6M731.1 355.1L733.9 355.6M731.1 355.1L730.9 367.1M733.9 355.6L730.9 367.1M730.9 367.1L733.9 367.5M730.9 367.1L730.8 375.8M730.9 367.1L733.0 379.3M730.8 375.8L733.0 379.3M730.8 375.8L730.5 389.4M733.0 379.3L730.5 389.4M730.5 389.4L732.6 389.2M730.5 389.4L730.3 400.8M730.5 389.4L732.0 398.2M730.3 400.8L732.0 398.2M730.3 400.8L730.2 408.5M732.0 398.2L730.2 408.5M730.2 408.5L731.6 408.1M730.2 408.5L730.0 420.0M731.6 408.1L730.0 420.0M730.0 420.0L731.3 420.0M736.6 290.2L743.0 291.0M736.6 290.2L737.7 304.2M743.0 291.0L737.7 304.2M737.7 304.2L742.1 303.1M737.7 304.2L735.6 313.1M737.7 304.2L741.4 312.2M735.6 313.1L741.4 312.2M735.6 313.1L736.8 325.4M741.4 312.2L736.8 325.4M736.8 325.4L740.7 320.6M736.8 325.4L734.8 331.0M740.7 320.6L734.8 331.0M734.8 331.0L739.4 337.0M734.8 331.0L736.2 342.2M734.8 331.0L738.7 347.1M736.2 342.2L738.7 347.1M736.2 342.2L733.9 355.6M736.2 342.2L737.8 358.0M733.9 355.6L737.8 358.0M733.9 355.6L733.9 367.5M733.9 355.6L737.3 364.7M733.9 367.5L737.3 364.7M733.9 367.5L733.0 379.3M737.3 364.7L733.0 379.3M733.0 379.3L736.4 376.4M733.0 379.3L732.6 389.2M736.4 376.4L732.6 389.2M732.6 389.2L735.6 386.1M732.6 389.2L732.0 398.2M732.6 389.2L734.8 396.2M732.0 398.2L734.8 396.2M732.0 398.2L731.6 408.1M734.8 396.2L731.6 408.1M731.6 408.1L734.1 406.4M731.6 408.1L731.3 420.0M731.6 408.1L733.0 420.0M731.3 420.0L733.0 420.0M743.0 291.0L742.1 303.1M742.1 303.1L741.4 312.2M741.4 312.2L740.7 320.6M740.7 320.6L739.4 337.0M739.4 337.0L738.7 347.1M738.7 347.1L737.8 358.0M737.8 358.0L737.3 364.7M737.3 364.7L736.4 376.4M736.4 376.4L735.6 386.1M735.6 386.1L734.8 396.2M734.8 396.2L734.1 406.4M734.1 406.4L733.0 420.0M701.0 361.0L708.7 364.5M701.0 361.0L715.6 373.0M701.0 361.0L717.7 369.0M715.6 373.0L717.7 369.0M715.6 373.0L730.0 385.0M715.6 373.0L729.8 377.8M730.0 385.0L729.8 377.8M708.7 364.5L716.5 368.0M708.7 364.5L717.7 369.0M708.7 364.5L723.4 368.5M717.7 369.0L723.4 368.5M717.7 369.0L729.8 377.8M723.4 368.5L729.8 377.8M729.8 377.8L729.5 369.0M716.5 368.0L723.4 368.5M723.4 368.5L729.5 369.0M625.7 332.4L631.9 334.9M625.7 332.4L626.1 342.7M631.9 334.9L626.1 342.7M626.1 342.7L632.5 343.2M626.1 342.7L626.5 352.1M632.5 343.2L626.5 352.1M626.5 352.1L631.1 353.9M626.5 352.1L626.9 360.8M631.1 353.9L626.9 360.8M626.9 360.8L631.6 363.9M626.9 360.8L627.3 369.5M631.6 363.9L627.3 369.5M627.3 369.5L633.2 370.7M627.3 369.5L627.7 379.2M627.3 369.5L634.7 379.6M627.7 379.2L634.7 379.6M627.7 379.2L628.0 386.5M627.7 379.2L633.8 389.8M628.0 386.5L633.8 389.8M631.9 334.9L637.0 337.0M631.9 334.9L632.5 343.2M637.0 337.0L632.5 343.2M632.5 343.2L637.3 344.2M632.5 343.2L631.1 353.9M637.3 344.2L631.1 353.9M631.1 353.9L637.9 358.1M631.1 353.9L631.6 363.9M631.1 353.9L638.3 365.4M631.6 363.9L638.3 365.4M631.6 363.9L633.2 370.7M638.3 365.4L633.2 370.7M633.2 370.7L638.7 375.9M633.2 370.7L634.7 379.6M633.2 370.7L639.0 382.5M634.7 379.6L639.0 382.5M634.7 379.6L633.8 389.8M639.0 382.5L633.8 389.8M633.8 389.8L639.5 393.0M637.0 337.0L637.3 344.2M637.3 344.2L637.9 358.1M637.9 358.1L638.3 365.4M638.3 365.4L638.7 375.9M638.7 375.9L639.0 382.5M639.0 382.5L639.5 393.0M637.0 337.0L643.9 335.3M637.0 337.0L637.5 347.7M643.9 335.3L637.5 347.7M637.5 347.7L644.0 346.6M637.5 347.7L637.7 353.4M637.5 347.7L644.7 356.6M637.7 353.4L644.7 356.6M637.7 353.4L638.3 366.2M637.7 353.4L643.3 365.6M638.3 366.2L643.3 365.6M638.3 366.2L638.6 371.8M643.3 365.6L638.6 371.8M638.6 371.8L645.4 377.9M638.6 371.8L639.2 386.1M645.4 377.9L639.2 386.1M639.2 386.1L643.8 384.7M639.2 386.1L639.5 393.0M643.8 384.7L639.5 393.0M639.5 393.0L646.2 395.7M643.9 335.3L651.0 333.5M643.9 335.3L644.0 346.6M651.0 333.5L644.0 346.6M644.0 346.6L651.2 344.6M644.0 346.6L644.7 356.6M644.0 346.6L651.3 352.4M644.7 356.6L651.3 352.4M644.7 356.6L643.3 365.6M651.3 352.4L643.3 365.6M643.3 365.6L651.5 366.3M643.3 365.6L645.4 377.9M651.5 366.3L645.4 377.9M645.4 377.9L651.6 374.8M645.4 377.9L643.8 384.7M651.6 374.8L643.8 384.7M643.8 384.7L651.8 385.4M643.8 384.7L646.2 395.7M651.8 385.4L646.2 395.7M646.2 395.7L652.0 398.0M651.0 333.5L651.2 344.6M651.2 344.6L651.3 352.4M651.3 352.4L651.5 366.3M651.5 366.3L651.6 374.8M651.6 374.8L651.8 385.4M651.8 385.4L652.0 398.0M630.2 399.0L639.5 392.0M630.2 399.0L638.2 404.5M639.5 392.0L638.2 404.5M638.2 404.5L649.1 397.9M638.2 404.5L647.3 410.9M638.2 404.5L656.3 402.3M647.3 410.9L656.3 402.3M647.3 410.9L654.9 416.2M656.3 402.3L654.9 416.2M654.9 416.2L664.0 407.0M654.9 416.2L664.9 423.2M654.9 416.2L674.7 413.5M664.9 423.2L674.7 413.5M664.9 423.2L671.6 427.9M664.9 423.2L681.0 417.4M671.6 427.9L681.0 417.4M671.6 427.9L680.4 434.0M681.0 417.4L680.4 434.0M680.4 434.0L691.6 423.8M680.4 434.0L689.0 440.0M691.6 423.8L689.0 440.0M689.0 440.0L698.4 428.0M639.5 392.0L649.1 397.9M649.1 397.9L656.3 402.3M656.3 402.3L664.0 407.0M664.0 407.0L674.7 413.5M674.7 413.5L681.0 417.4M681.0 417.4L691.6 423.8M691.6 423.8L698.4 428.0M630.2 399.0L638.3 404.6M630.2 399.0L630.6 407.6M630.2 399.0L638.2 412.2M630.6 407.6L638.2 412.2M630.6 407.6L631.1 416.4M638.2 412.2L631.1 416.4M631.1 416.4L637.0 418.8M631.1 416.4L631.5 424.0M631.1 416.4L637.8 428.3M631.5 424.0L637.8 428.3M638.3 404.6L644.6 409.1M638.3 404.6L638.2 412.2M638.3 404.6L647.2 418.1M638.2 412.2L647.2 418.1M638.2 412.2L637.0 418.8M647.2 418.1L637.0 418.8M637.0 418.8L645.3 424.8M637.0 418.8L637.8 428.3M645.3 424.8L637.8 428.3M637.8 428.3L646.1 433.8M644.6 409.1L654.1 415.7M644.6 409.1L647.2 418.1M644.6 409.1L654.1 422.9M647.2 418.1L654.1 422.9M647.2 418.1L645.3 424.8M654.1 422.9L645.3 424.8M645.3 424.8L651.8 431.5M645.3 424.8L646.1 433.8M645.3 424.8L652.9 438.4M646.1 433.8L652.9 438.4M654.1 415.7L660.4 420.0M654.1 415.7L654.1 422.9M654.1 415.7L658.1 427.8M654.1 422.9L658.1 427.8M654.1 422.9L651.8 431.5M654.1 422.9L659.2 434.8M651.8 431.5L659.2 434.8M651.8 431.5L652.9 438.4M651.8 431.5L658.9 442.4M652.9 438.4L658.9 442.4M660.4 420.0L666.6 424.4M660.4 420.0L658.1 427.8M660.4 420.0L668.4 434.8M658.1 427.8L668.4 434.8M658.1 427.8L659.2 434.8M668.4 434.8L659.2 434.8M659.2 434.8L667.1 441.3M659.2 434.8L658.9 442.4M667.1 441.3L658.9 442.4M658.9 442.4L667.1 447.9M666.6 424.4L673.8 429.4M666.6 424.4L668.4 434.8M666.6 424.4L674.5 436.3M668.4 434.8L674.5 436.3M668.4 434.8L667.1 441.3M668.4 434.8L673.6 445.6M667.1 441.3L673.6 445.6M667.1 441.3L667.1 447.9M667.1 441.3L675.5 453.6M667.1 447.9L675.5 453.6M673.8 429.4L679.8 433.6M673.8 429.4L674.5 436.3M679.8 433.6L674.5 436.3M674.5 436.3L682.6 444.5M674.5 436.3L673.6 445.6M674.5 436.3L681.4 448.1M673.6 445.6L681.4 448.1M673.6 445.6L675.5 453.6M681.4 448.1L675.5 453.6M675.5 453.6L682.3 458.2M679.8 433.6L689.0 440.0M679.8 433.6L682.6 444.5M689.0 440.0L682.6 444.5M682.6 444.5L688.9 446.4M682.6 444.5L681.4 448.1M688.9 446.4L681.4 448.1M681.4 448.1L688.8 455.6M681.4 448.1L682.3 458.2M688.8 455.6L682.3 458.2M682.3 458.2L688.7 462.5M689.0 440.0L688.9 446.4M688.9 446.4L688.8 455.6M688.8 455.6L688.7 462.5M689.0 440.0L698.4 428.0M689.0 440.0L688.9 448.6M689.0 440.0L698.6 436.2M688.9 448.6L698.6 436.2M688.9 448.6L688.8 454.3M688.9 448.6L698.8 446.7M688.8 454.3L698.8 446.7M688.8 454.3L688.7 462.5M688.8 454.3L699.0 456.6M688.7 462.5L699.0 456.6M698.4 428.0L698.6 436.2M698.6 436.2L698.8 446.7M698.8 446.7L699.0 456.6" fill="none" stroke="#071407" stroke-width="1.05" stroke-linecap="round"/><path d="M621.0 252.4L719.5 295.6L715.6 367.3M621.8 329.5L715.6 367.3M622.0 271.0L718.5 313.0M622.0 277.0L718.0 318.5M719.5 295.6L732.3 289.7M652.0 335.0L652.5 399.0M630.2 399.0L689.0 440.0L688.7 462.5M689.0 440.0L698.4 428.0L699.0 456.6M639.5 392.5L698.4 428.0M637.0 337.0L639.5 393.0M732.3 289.7L730.0 420.0M701.0 361.0L702.0 372.0L730.0 385.0M715.6 367.3L729.3 368.3" fill="none" stroke="#071407" stroke-width="1.6" stroke-linejoin="round" stroke-linecap="round"/><polygon points="621.0,252.4 630.0,244.8 633.0,245.4 743.0,291.0 735.5,385.0 728.0,478.0 699.0,456.6 688.7,462.5 631.5,424.0 630.2,399.0 626.7,398.0 626.7,387.0 628.0,386.5 625.7,332.4 621.8,329.5 621.8,317.7 624.4,317.0" fill="none" stroke="#071407" stroke-width="1.4" stroke-linejoin="round"/><path d="M632.1 246.5L631 214.4M632.1 246.5L610.5 254.4M632.1 246.5L658.4 255.7" stroke="#f8f440" stroke-width="1.5" fill="none"/><g font-family="Liberation Serif,serif" font-size="12" fill="#f8f440" text-anchor="middle"><text x="634.2" y="211">Y</text><text x="608" y="257.2">Z</text><text x="661.5" y="257.2">X</text></g></svg>
<svg class="abs" style="left:406px;top:123px;overflow:hidden" width="440" height="460" viewBox="406 123 440 460"><path d="M457 542V529h-2.6L459 520l4.600 9H461v13z" fill="#12b212"/><path d="M460 543.600L448.500 550.200l1.300 2.300L440 552.200l5-8.400 1.300 2.300 11.600-6.500z" fill="#0a0ab4"/><path d="M458 543.600l11.500 6.600-1.300 2.300 9.800-.300-5-8.400-1.300 2.300-11.600-6.500z" fill="#c41414"/><g font-family="Liberation Sans,sans-serif" font-weight="bold" font-size="9.500" fill="#fff" text-anchor="middle"><text x="458.200" y="513.800">Y</text><text x="431.500" y="559.200">Z</text><text x="485" y="559.200">X</text></g></svg>
<div class="abs" style="left:0;top:0;width:846px;height:8px;overflow:hidden">
<span class="t" style="left:22px;top:-12.30px;font-size:15px;line-height:15px;color:#1a1a2a;transform:scaleX(0.8688);">Abaqus/CAE 6.10-1 [Viewport: 1]</span>
<svg class="abs" style="left:8px;top:-3px" width="9" height="8" viewBox="0 0 9 8"><path d="M0.500 2l4-4 4 4-2 4h-4z" fill="#8a78b8"/></svg>
</div>
<svg class="abs" style="left:0px;top:0px" width="160" height="30" viewBox="0 0 160 30"><g fill="none" stroke="#ffffff" stroke-opacity=".55" stroke-width="3.600" stroke-linecap="round" stroke-linejoin="round"><path transform="translate(10,9.5)" d="M6 0V17M1 4.500H11V10.500H1Z"/><path transform="translate(25,10.5)" d="M1 1H11V14H1ZM3.500 4H8.500M3.500 7H8.500M3.500 10.500H8.500M6 4V10.500M8 8.500l1 1"/><path transform="translate(41,10)" d="M1.500 2.500l1.500 1.500M1 6.500l1.500 1.500M1 14.500l2-4M6.500 0.500L4.500 4.500M5.500 3H12M6 6H11.500M5.500 9H10C10 12 10.500 14.500 12.500 15"/><path transform="translate(55,9.5)" d="M2 3.500H10.500M6.500 0L3 8H11M0.500 11.500H12M6.500 6V17"/><path transform="translate(72,11)" d="M2 2H10.500M6 2V12.500M0 13H12"/><path transform="translate(84,10)" d="M0.500 3L4.500 1.500M0 5.500H5.200M2.800 2.500V16M2.800 7L0 11.500M2.800 7L5.200 9.500M6.800 1.500H11.500V5.500H6.800ZM6 8H12.500M7 11H11.500M9.200 8V14.500M5.800 15H13"/><path transform="translate(100,9.5)" d="M2 1V9.500M4.200 0V10C4.200 13 3 15 0.500 16.500M5.800 3H12.500M6.800 6H11.800V12M6.800 6V13M9.300 3V17"/><path transform="translate(115.5,10)" d="M5.500 0l1.700 1.700M1.500 4.500H10L2.500 12.500M0 13.500C4 12 8 15 12.500 15"/><path transform="translate(130.5,9.5)" d="M6 0l1 1.700M1 5.500V3.200H11.500V5.500M3 7H9.500M7 7C5 9.500 3 11 0.500 11.500M6 8.500C8 10.500 7.500 14.500 4.500 16.500M6.500 10.500L2 14M7.500 10L12 15M11 8L8.500 10.500"/></g><g fill="none" stroke="#1d1d26" stroke-width="1.900" stroke-linecap="round" stroke-linejoin="round"><path transform="translate(10,9.5)" d="M6 0V17M1 4.500H11V10.500H1Z"/><path transform="translate(25,10.5)" d="M1 1H11V14H1ZM3.500 4H8.500M3.500 7H8.500M3.500 10.500H8.500M6 4V10.500M8 8.500l1 1"/><path transform="translate(41,10)" d="M1.500 2.500l1.500 1.500M1 6.500l1.500 1.500M1 14.500l2-4M6.500 0.500L4.500 4.500M5.500 3H12M6 6H11.500M5.500 9H10C10 12 10.500 14.500 12.500 15"/><path transform="translate(55,9.5)" d="M2 3.500H10.500M6.500 0L3 8H11M0.500 11.500H12M6.500 6V17"/><path transform="translate(72,11)" d="M2 2H10.500M6 2V12.500M0 13H12"/><path transform="translate(84,10)" d="M0.500 3L4.500 1.500M0 5.500H5.200M2.800 2.500V16M2.800 7L0 11.500M2.800 7L5.200 9.500M6.800 1.500H11.500V5.500H6.800ZM6 8H12.500M7 11H11.500M9.200 8V14.500M5.800 15H13"/><path transform="translate(100,9.5)" d="M2 1V9.500M4.200 0V10C4.200 13 3 15 0.500 16.500M5.800 3H12.500M6.800 6H11.800V12M6.800 6V13M9.300 3V17"/><path transform="translate(115.5,10)" d="M5.500 0l1.700 1.700M1.500 4.500H10L2.500 12.500M0 13.500C4 12 8 15 12.500 15"/><path transform="translate(130.5,9.5)" d="M6 0l1 1.700M1 5.500V3.200H11.500V5.500M3 7H9.500M7 7C5 9.500 3 11 0.500 11.500M6 8.500C8 10.500 7.500 14.500 4.500 16.500M6.500 10.500L2 14M7.500 10L12 15M11 8L8.500 10.500"/></g></svg>
<span class="t" style="left:9.3px;top:31.55px;font-family:'Liberation Mono',monospace;font-size:16.5px;line-height:16.5px;color:#333;transform:scaleX(0.8648);-webkit-text-stroke:0.45px #333;text-shadow:0 0 2px #fff,1px 1px 1px #ddd">www.cartech8.com</span>
</body></html>
